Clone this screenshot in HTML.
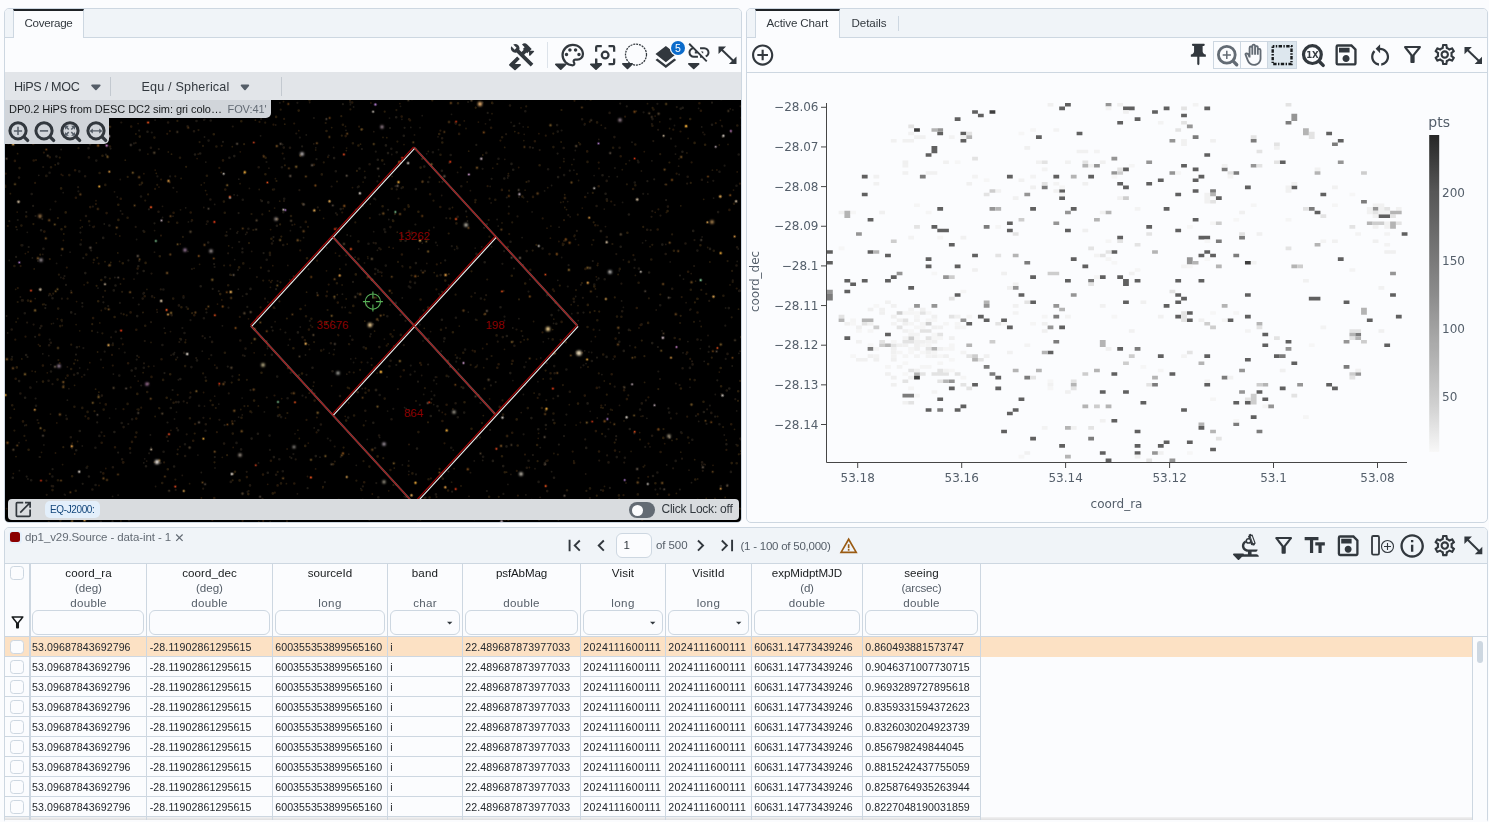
<!DOCTYPE html>
<html lang="en"><head><meta charset="utf-8"><title>Coverage / Active Chart</title>
<style>
html,body{margin:0;padding:0}
html,body{width:1489px;height:822px;overflow:hidden}
body{background:#fbfcfe;font-family:"Liberation Sans",sans-serif}
#app{position:relative;width:1489px;height:822px;overflow:hidden;background:#fbfcfe}
.panel{position:absolute;border:1px solid #cdd7e1;border-radius:5px;background:#fbfcfe}
.tabbar{position:absolute;height:28px;background:#f0f4f8;border-bottom:1px solid #cdd7e1;border-radius:4px 4px 0 0}
.tab{position:absolute;height:27px;background:#fbfcfe;border-top:2px solid #1f2327;border-left:1px solid #cdd7e1;border-right:1px solid #cdd7e1}
.t{position:absolute;white-space:pre;line-height:1;font-family:"Liberation Sans",sans-serif}
.ct{font-family:"DejaVu Sans","Liberation Sans",sans-serif;font-size:12px;fill:#525d69}
#ic{position:absolute;left:0;top:0}
</style></head>
<body>
<div id="app">
<div class="panel" style="left:4px;top:8px;width:736px;height:513px"></div>
<div class="panel" style="left:746px;top:8px;width:740px;height:513px"></div>
<div class="panel" style="left:4px;top:527px;width:1482px;height:295px"></div>
<div class="tabbar" style="left:5px;top:9px;width:736px;"></div>
<div class="tabbar" style="left:747px;top:9px;width:740px;"></div>
<div class="tab" style="left:13px;top:9px;width:69px;"></div>
<div class="tab" style="left:755px;top:9px;width:83px;"></div>
<div style="position:absolute;left:898px;top:16px;width:1px;height:15px;background:#cdd7e1"></div>
<div style="position:absolute;left:547px;top:42px;width:1px;height:26px;background:#dde3ea"></div>
<div style="position:absolute;left:5px;top:72px;width:736px;height:450px;background:#000;border-radius:0 0 4px 4px;overflow:hidden"><svg width="737" height="450" viewBox="0 0 737 450" style="position:absolute;left:0;top:0"><path stroke="#26180a" stroke-width="2.2" stroke-linecap="round" fill="none" d="M333.4 263.3h0M467.6 278.5h0M31.0 88.1h0M366.5 286.5h0M305.0 431.7h0M30.1 110.9h0M450.4 50.8h0M481.9 272.2h0M504.2 162.1h0M404.0 372.5h0M512.9 423.6h0M479.1 242.5h0M579.8 51.9h0M279.1 46.9h0M150.1 116.9h0M94.1 114.4h0M289.2 51.5h0M268.5 52.7h0M46.9 55.0h0M503.7 141.7h0M734.9 111.7h0M686.6 90.4h0M107.8 293.6h0M498.7 218.9h0M381.7 273.7h0M395.6 304.6h0M162.2 61.8h0M361.3 233.6h0M258.2 448.9h0M307.3 255.0h0M675.5 59.5h0M557.8 171.5h0M107.0 282.9h0M285.7 300.7h0M185.5 320.7h0M235.8 29.0h0M311.6 360.4h0M397.7 164.5h0M671.6 101.7h0M721.4 377.9h0M174.2 441.3h0M90.9 132.1h0M178.5 224.2h0M234.8 244.9h0M322.1 219.7h0M620.1 44.7h0M357.4 57.2h0M710.8 51.2h0M117.8 272.3h0M606.2 129.5h0M164.8 110.4h0M431.4 217.4h0M254.5 49.9h0M15.6 194.1h0M265.9 210.2h0M282.0 449.4h0M569.2 164.3h0M569.5 28.8h0M211.9 360.2h0M596.3 333.6h0M520.0 382.6h0M216.7 73.8h0M269.5 323.5h0M482.6 114.2h0M685.2 286.9h0M185.4 429.5h0M416.2 292.9h0M118.5 337.2h0M345.0 28.7h0M323.0 85.1h0M431.8 192.4h0M12.8 216.1h0M373.4 445.5h0M156.1 107.5h0M159.1 390.4h0M10.3 267.7h0M532.7 325.9h0M54.7 291.0h0M265.4 443.5h0M356.5 290.3h0M515.7 270.1h0M20.5 264.7h0M61.8 195.6h0M214.3 95.9h0M692.7 427.5h0M440.4 342.3h0M337.2 140.5h0M643.5 371.6h0M495.4 68.6h0M676.7 225.1h0M312.1 188.7h0M628.4 183.2h0M38.9 80.6h0M237.6 448.8h0M323.7 212.6h0M513.5 61.2h0M537.5 260.4h0M364.9 146.1h0M643.1 404.8h0M559.0 148.2h0M435.4 58.7h0M225.2 193.4h0M258.5 83.5h0M588.6 257.7h0M93.7 191.6h0M439.5 371.3h0M354.1 54.7h0M83.7 67.2h0M164.9 59.1h0M643.4 325.3h0M2.8 154.0h0M207.4 448.1h0M653.4 137.3h0M269.8 420.7h0M0.7 101.7h0M731.7 216.5h0M311.9 345.5h0M567.7 379.6h0M675.4 45.9h0M593.7 90.6h0M668.3 57.7h0M41.4 408.7h0M80.4 344.3h0M277.7 81.5h0M549.1 219.2h0M423.9 444.6h0M682.2 344.7h0M172.7 322.8h0M156.0 163.6h0M118.7 206.9h0M511.8 398.9h0M618.5 423.2h0M136.2 335.7h0M301.5 347.9h0M295.2 178.4h0M99.3 364.0h0M584.8 49.8h0M537.7 146.4h0M540.8 63.7h0"/><path stroke="#201810" stroke-width="2.6" stroke-linecap="round" fill="none" d="M374.3 275.1h0M481.9 287.0h0M240.5 276.6h0M558.7 76.0h0M452.7 144.8h0M509.4 273.8h0M660.7 182.0h0M636.6 252.4h0M505.0 33.5h0M265.0 183.0h0M692.5 267.5h0M534.4 322.4h0M205.4 127.5h0M19.8 42.1h0M163.1 50.5h0M549.6 301.2h0M80.1 104.2h0M667.2 216.8h0M14.0 105.6h0M609.4 65.1h0M46.9 414.0h0M147.1 224.4h0M180.1 384.0h0M700.9 26.2h0M523.7 109.3h0M380.2 440.3h0M173.9 233.4h0M444.6 136.8h0M219.7 310.3h0M219.1 371.6h0M569.0 229.8h0M503.3 103.8h0M614.6 75.8h0M731.5 193.5h0M435.4 223.7h0M591.6 134.0h0M285.0 75.8h0M732.1 175.2h0M253.7 95.2h0M118.0 390.5h0M65.8 365.3h0M662.9 134.6h0M696.9 107.7h0M107.9 395.2h0M245.0 413.4h0M370.7 171.2h0M642.2 157.7h0M456.3 114.2h0M88.4 155.0h0M734.5 218.8h0M44.1 273.2h0M401.2 444.5h0M6.7 257.5h0M603.5 390.4h0M15.4 321.5h0M297.5 265.2h0M271.1 402.7h0M406.8 160.6h0M278.8 75.6h0M83.9 85.4h0M360.9 433.5h0M481.3 80.9h0M278.2 173.0h0M384.4 294.2h0M419.9 199.0h0M182.6 54.3h0M722.5 281.9h0M636.8 331.4h0M604.6 40.9h0M171.1 330.1h0M211.9 295.9h0M153.5 139.8h0M385.6 288.7h0M335.0 324.0h0M386.5 347.3h0M25.3 315.5h0M17.7 228.4h0M385.4 155.1h0M542.2 223.3h0M572.8 241.0h0M45.8 270.8h0M437.9 406.8h0M225.8 409.9h0M374.1 363.5h0M138.9 221.0h0M81.0 144.0h0M202.6 149.5h0M435.7 203.1h0M48.0 414.2h0M267.0 171.5h0M325.9 271.3h0M87.4 417.5h0M405.3 209.9h0M30.8 50.0h0M647.1 363.8h0M145.9 75.8h0M450.8 51.6h0M370.1 202.0h0M677.6 296.3h0M374.3 176.3h0M687.6 292.4h0M445.9 441.0h0M315.9 352.5h0M189.0 59.3h0M577.1 47.3h0M497.8 265.1h0M682.7 104.8h0M117.1 387.2h0M17.0 228.4h0M564.8 319.7h0M539.6 392.6h0M450.6 331.3h0M437.1 66.3h0M137.7 226.6h0M61.8 346.9h0M601.8 165.0h0M207.1 269.9h0M542.2 419.1h0M200.8 352.3h0M521.7 179.1h0M347.4 267.7h0M90.4 438.3h0M706.3 340.9h0M118.6 355.1h0M69.1 302.8h0M43.6 308.7h0M96.9 323.6h0M415.2 245.5h0M525.0 75.3h0M680.5 171.5h0M601.7 108.9h0M697.1 390.4h0M521.8 395.7h0M721.8 318.5h0M364.6 92.3h0M44.2 443.1h0M166.7 243.3h0M36.3 254.1h0M617.2 239.3h0M235.3 268.5h0M360.3 338.8h0"/><path stroke="#201810" stroke-width="1.8" stroke-linecap="round" fill="none" d="M350.6 286.3h0M282.8 193.4h0M592.3 346.0h0M47.3 441.7h0M290.0 361.8h0M341.8 302.2h0M232.8 159.6h0M379.4 267.1h0M114.1 276.6h0M62.4 294.9h0M394.0 89.9h0M150.6 414.5h0M67.0 376.4h0M409.5 62.9h0M148.9 294.1h0M121.2 445.1h0M684.9 238.0h0M360.8 348.8h0M177.3 403.4h0M209.7 324.2h0M198.8 135.5h0M115.3 107.5h0M292.4 421.8h0M614.5 333.4h0M46.4 223.5h0M246.7 340.5h0M360.4 433.8h0M485.2 114.4h0M449.6 177.6h0M480.5 51.8h0M227.3 175.6h0M304.7 30.5h0M703.0 263.5h0M75.4 156.0h0M593.8 67.4h0M199.5 334.1h0M56.9 249.4h0M451.6 286.0h0M686.2 201.6h0M562.7 129.6h0M674.0 86.8h0M698.0 60.5h0M201.5 152.2h0M600.5 154.6h0M651.2 238.0h0M580.7 402.0h0M600.2 333.0h0M436.7 123.5h0M399.3 424.5h0M244.9 196.3h0M700.2 392.7h0M166.1 283.2h0M362.9 186.4h0M716.1 321.8h0M618.4 187.8h0M77.6 32.4h0M126.1 446.4h0M618.5 314.6h0M516.2 340.6h0M189.7 429.2h0M362.2 231.6h0M73.1 428.3h0M171.9 119.8h0M37.8 182.4h0M287.2 443.4h0M535.1 425.3h0M58.4 206.2h0M168.0 144.2h0M263.9 96.2h0M470.2 295.4h0M681.1 230.7h0M433.0 64.8h0M14.0 370.7h0M321.7 175.8h0M206.0 34.1h0M246.7 179.4h0M524.9 207.4h0M636.4 99.0h0M694.9 249.1h0M423.0 26.7h0M270.1 249.7h0M420.5 162.8h0M63.9 316.7h0M175.5 137.8h0M505.9 402.4h0M221.6 160.0h0M465.5 400.7h0M407.0 27.5h0M82.7 297.4h0M284.9 384.9h0M331.6 435.1h0M486.6 174.8h0M359.5 190.9h0M373.8 222.0h0M673.6 94.2h0M157.5 134.3h0M717.3 54.6h0M702.7 110.2h0M149.5 180.2h0M465.4 118.7h0M415.4 448.1h0M416.7 303.5h0M318.7 277.5h0M244.4 116.4h0M660.8 172.4h0M237.3 342.9h0M699.0 392.2h0M308.8 71.8h0M39.5 433.8h0M486.1 130.9h0M417.3 171.2h0M109.5 119.8h0M725.3 36.9h0M645.0 374.8h0M255.7 127.8h0M540.8 357.0h0M270.7 53.0h0M129.0 207.1h0M696.8 392.9h0M141.7 389.1h0M558.9 86.7h0M149.6 158.6h0M15.4 224.9h0M152.2 240.2h0M425.6 259.6h0M452.6 100.4h0M519.2 62.3h0M116.1 241.5h0M735.1 279.2h0M421.8 191.4h0M599.3 137.1h0M560.7 168.8h0M328.6 75.4h0M499.8 87.3h0M624.5 88.6h0M368.8 59.7h0M565.2 144.8h0M464.0 424.3h0M575.8 295.5h0M518.3 192.6h0M165.5 259.6h0M530.0 396.7h0M275.4 257.4h0M684.0 398.2h0M343.8 382.2h0"/><path stroke="#201c16" stroke-width="2.6" stroke-linecap="round" fill="none" d="M329.1 86.1h0M54.1 64.2h0M229.8 40.2h0M85.0 72.2h0M526.4 346.1h0M224.4 85.8h0M78.2 41.9h0M98.2 165.9h0M203.2 170.5h0M327.5 299.3h0M721.4 372.3h0M335.7 137.1h0M83.9 404.5h0M623.9 142.5h0M57.9 61.2h0M495.5 235.3h0M173.5 330.1h0M581.2 375.9h0M423.2 110.0h0M175.9 267.4h0M75.6 172.5h0M383.0 81.1h0M391.2 45.2h0M546.6 243.1h0M360.0 105.6h0M352.7 320.3h0M239.5 101.4h0M410.8 117.1h0M80.3 201.1h0M175.3 307.0h0M265.0 429.2h0M263.3 130.4h0M271.9 153.7h0M705.0 176.9h0M553.0 324.0h0M724.3 316.5h0M134.8 78.1h0M262.8 400.8h0M688.2 158.9h0M677.7 35.7h0M252.9 361.7h0M38.4 176.7h0M168.6 282.2h0M432.5 334.3h0M499.3 106.5h0M195.7 214.3h0M141.0 394.3h0M292.9 260.4h0M400.6 168.8h0M246.1 432.1h0M410.9 191.1h0M368.3 350.7h0M266.9 282.7h0M533.3 357.3h0M310.8 384.1h0M391.7 80.3h0M351.1 137.7h0M601.8 127.2h0M66.2 240.4h0M190.0 82.5h0M549.0 405.7h0M439.5 266.4h0M229.3 84.1h0M74.8 359.0h0M104.4 153.5h0M562.4 431.2h0M110.5 213.5h0M572.3 280.9h0M458.2 315.9h0M71.2 378.2h0M164.7 445.0h0M372.8 87.8h0M501.5 374.4h0M657.3 172.6h0M540.9 353.0h0M623.9 257.9h0M142.5 59.8h0M126.7 298.5h0M354.5 96.5h0M597.5 103.2h0M734.3 219.0h0M241.6 222.0h0M313.3 358.3h0M307.5 295.7h0M169.1 394.5h0M506.5 91.9h0M256.8 129.0h0M401.1 425.0h0M647.2 271.1h0M508.2 97.7h0M539.9 391.1h0M21.1 283.0h0M479.7 190.2h0M109.4 360.0h0M51.4 84.5h0M501.9 264.0h0M107.9 435.6h0M452.1 285.8h0M551.3 251.8h0M677.4 79.8h0M268.9 385.1h0M49.5 434.1h0M582.6 331.4h0M537.6 176.5h0M707.0 52.7h0M273.0 343.9h0M601.6 284.9h0M304.2 438.9h0M152.2 436.5h0M72.7 301.3h0M425.8 344.0h0M498.2 394.1h0M614.3 269.8h0M47.5 226.3h0M698.9 340.0h0M618.8 278.9h0M53.2 91.6h0M719.9 433.6h0M505.3 301.1h0M7.8 405.8h0M600.6 121.7h0M132.2 244.1h0M195.2 81.5h0M145.6 435.1h0M207.4 434.9h0M548.3 282.3h0M225.3 202.8h0M138.7 199.0h0M436.9 98.8h0M505.5 169.7h0M553.1 105.1h0M487.9 388.9h0M648.0 404.0h0M246.6 366.6h0M20.1 325.7h0M133.3 194.2h0M412.0 376.6h0M14.1 309.1h0M245.5 216.9h0M675.7 36.8h0M398.8 63.8h0M644.1 200.5h0M419.3 94.6h0M238.5 446.9h0M615.7 174.8h0M165.8 336.0h0M624.8 357.0h0M71.9 275.2h0M436.9 247.8h0M36.1 158.2h0M380.9 73.4h0M100.2 205.2h0"/><path stroke="#241a0c" stroke-width="1.8" stroke-linecap="round" fill="none" d="M11.1 250.0h0M57.9 46.1h0M566.2 232.7h0M596.3 53.2h0M681.9 80.9h0M573.6 108.5h0M683.1 66.4h0M189.1 196.3h0M548.9 381.5h0M518.8 68.6h0M462.2 109.9h0M453.4 297.5h0M310.7 78.0h0M132.2 337.3h0M631.4 39.1h0M268.6 117.7h0M548.8 247.2h0M630.4 203.4h0M564.3 332.7h0M254.2 117.5h0M281.4 411.7h0M92.9 52.8h0M115.9 448.9h0M269.6 136.1h0M184.6 411.7h0M619.0 348.9h0M573.2 248.6h0M399.0 72.6h0M36.5 380.3h0M559.0 172.1h0M308.3 314.2h0M235.8 337.5h0M305.7 253.4h0M692.7 407.0h0M566.9 92.6h0M542.7 115.7h0M165.8 327.5h0M385.1 232.8h0M654.8 49.8h0M702.7 175.5h0M675.8 380.2h0M199.3 110.8h0M57.6 392.6h0M645.0 174.7h0M204.0 286.8h0M447.9 337.0h0M345.7 241.0h0M42.9 67.7h0M74.3 274.6h0M341.6 76.1h0M358.1 110.1h0M573.0 233.6h0M621.0 411.0h0M533.6 361.3h0M528.6 249.5h0M270.4 106.7h0M449.1 396.7h0M639.7 393.5h0M71.1 252.6h0M337.1 213.0h0M115.5 212.0h0M163.3 80.0h0M387.1 104.4h0M304.5 277.4h0M326.6 313.8h0M693.0 226.8h0M10.7 217.3h0M362.7 184.8h0M599.3 309.0h0M60.7 306.1h0M94.8 250.9h0M146.0 270.4h0M614.6 379.8h0M520.1 118.2h0M421.9 431.5h0M300.3 233.4h0M274.7 129.2h0M407.6 443.8h0M0.5 113.3h0M12.9 246.5h0M57.3 253.5h0M725.0 212.9h0M690.6 209.1h0M455.0 286.5h0M340.5 54.4h0M295.5 168.7h0M499.5 277.3h0M292.9 358.2h0M700.8 212.1h0M265.4 215.3h0M260.0 282.9h0M451.8 174.3h0M344.4 272.4h0M571.1 353.1h0M343.7 330.8h0M634.7 360.6h0M684.1 370.9h0M95.0 331.1h0M721.3 368.0h0M636.1 344.3h0M217.3 385.3h0M235.1 111.7h0M96.8 44.9h0M522.5 129.6h0M478.7 295.7h0M91.4 170.9h0M599.5 414.4h0M710.0 426.4h0M461.0 56.5h0M723.0 72.4h0M555.8 130.4h0M45.5 342.1h0M446.6 410.2h0M30.2 226.6h0M617.3 97.7h0M303.8 272.7h0M142.9 82.1h0M454.3 254.1h0M487.0 41.7h0M707.4 98.2h0M74.7 258.8h0M196.3 112.9h0M141.0 430.3h0M372.1 301.1h0M558.3 129.8h0M545.9 154.1h0M586.9 172.7h0M642.5 31.7h0M284.7 207.7h0M46.5 251.8h0M592.9 153.4h0M626.1 379.4h0M194.6 192.3h0M110.9 162.1h0M359.7 99.3h0M714.3 73.0h0M141.9 217.4h0M497.0 150.9h0"/><path stroke="#241a0c" stroke-width="2.2" stroke-linecap="round" fill="none" d="M140.2 128.6h0M0.4 114.9h0M248.3 158.0h0M62.6 226.7h0M100.1 218.8h0M332.0 109.5h0M655.2 82.2h0M736.0 379.2h0M701.3 221.9h0M121.7 243.3h0M484.4 164.7h0M246.5 142.0h0M53.4 288.1h0M389.9 142.2h0M571.9 102.1h0M12.7 230.0h0M484.6 126.7h0M735.0 308.9h0M350.3 150.4h0M727.7 209.9h0M486.6 284.0h0M220.6 163.7h0M262.7 274.3h0M194.6 70.1h0M638.5 394.8h0M170.3 104.3h0M210.8 336.0h0M318.8 90.4h0M667.1 162.4h0M258.2 208.6h0M492.3 92.0h0M597.9 335.9h0M718.1 355.1h0M391.4 38.1h0M418.6 238.4h0M497.5 328.4h0M557.9 313.1h0M643.9 226.3h0M569.7 163.4h0M193.5 58.1h0M82.4 394.5h0M38.3 40.0h0M334.4 183.9h0M11.2 155.0h0M470.9 294.8h0M355.1 297.9h0M172.8 377.5h0M143.6 294.5h0M260.2 50.7h0M243.6 419.1h0M177.9 164.9h0M30.6 50.6h0M303.0 154.8h0M239.4 334.1h0M623.3 323.3h0M393.0 189.9h0M198.0 73.9h0M329.8 389.5h0M607.4 172.0h0M466.4 224.6h0M328.6 282.5h0M425.9 406.4h0M482.2 207.5h0M170.4 407.6h0M322.6 238.0h0M327.0 248.9h0M572.8 142.7h0M689.0 249.8h0M652.5 422.3h0M73.5 76.2h0M320.7 51.0h0M375.7 177.3h0M605.8 337.6h0M66.2 272.7h0M198.1 301.4h0M507.2 150.4h0M392.4 69.6h0M125.7 315.4h0M48.2 221.7h0M353.7 114.4h0M152.2 112.8h0M19.4 363.9h0M171.0 287.6h0M424.1 158.4h0M581.4 418.9h0M274.4 229.4h0M696.3 217.9h0M261.8 269.0h0M33.5 351.0h0M344.5 240.7h0M428.5 128.7h0M5.5 345.8h0M493.8 424.8h0M275.7 37.7h0M117.1 219.8h0M647.3 172.8h0M571.0 218.1h0M348.8 300.5h0M675.1 251.0h0M309.1 270.1h0M450.6 222.7h0M563.6 430.2h0M614.2 426.9h0M516.5 259.1h0M475.0 365.4h0M214.1 313.6h0M402.6 438.4h0M621.9 112.3h0M43.8 449.9h0M356.6 418.2h0M286.5 321.3h0M272.6 430.2h0M420.1 266.5h0M558.9 89.5h0M373.5 114.7h0M593.8 301.4h0M219.1 193.5h0M35.0 385.0h0M465.7 292.9h0M470.7 35.8h0M360.4 316.4h0M521.2 34.4h0M527.7 178.6h0M725.5 444.1h0M588.4 168.1h0M81.5 55.3h0M9.4 358.6h0M548.3 61.6h0M479.6 227.6h0M727.1 198.9h0M518.9 441.3h0M358.5 389.2h0M160.2 261.1h0M726.7 245.3h0M21.2 353.2h0M366.7 293.1h0M343.9 272.1h0M386.8 221.1h0M87.0 258.9h0M633.5 406.1h0M396.6 163.2h0M552.9 382.5h0M282.5 433.0h0M255.6 235.4h0M712.5 344.5h0M555.6 267.8h0M3.3 71.4h0M424.6 105.4h0M351.4 408.7h0M257.3 142.4h0M559.1 168.9h0M735.0 436.6h0M722.6 189.1h0M97.4 261.3h0M297.3 131.6h0M53.9 202.7h0M154.0 336.0h0M39.1 232.3h0M104.9 206.5h0M676.7 361.2h0M241.9 307.8h0M419.9 316.2h0M345.4 37.4h0M272.7 399.9h0M210.2 439.1h0"/><path stroke="#241a0c" stroke-width="2.6" stroke-linecap="round" fill="none" d="M172.2 150.7h0M623.9 189.9h0M9.2 56.6h0M100.4 236.5h0M227.8 361.6h0M175.0 85.7h0M471.6 182.3h0M77.3 335.9h0M306.4 246.8h0M184.9 346.3h0M498.1 342.6h0M608.1 75.8h0M484.1 424.7h0M592.3 248.3h0M582.5 89.9h0M451.4 151.4h0M550.6 230.7h0M490.3 127.7h0M424.6 425.6h0M236.5 345.8h0M732.3 53.5h0M53.2 236.6h0M286.0 144.0h0M612.0 244.6h0M736.2 265.1h0M41.3 103.9h0M157.2 411.0h0M52.9 408.3h0M142.2 320.0h0M632.8 422.4h0M582.5 255.0h0M432.1 203.9h0M64.3 103.1h0M219.9 280.7h0M152.3 36.8h0M360.5 320.8h0M168.6 330.7h0M16.4 153.6h0M436.0 257.8h0M689.7 308.1h0M646.3 187.5h0M331.9 211.3h0M218.9 129.6h0M470.5 128.1h0M264.9 180.9h0M575.0 72.3h0M387.5 264.5h0M139.2 159.7h0M616.4 244.7h0M395.8 262.9h0M522.8 336.1h0M353.4 169.4h0M548.4 75.1h0M435.5 82.8h0M52.6 307.6h0M548.5 341.5h0M46.0 95.2h0M337.9 52.7h0M16.6 173.2h0M131.4 360.6h0M491.6 263.4h0M272.2 147.2h0M403.5 393.8h0M68.1 444.9h0M14.6 96.1h0M630.3 72.5h0M316.2 278.6h0M389.0 274.3h0M423.5 407.3h0M55.4 448.6h0M685.8 217.7h0M353.4 186.9h0M7.2 333.3h0M497.1 65.2h0M211.4 74.5h0M69.4 334.8h0M315.4 249.1h0M613.9 423.4h0M669.7 266.0h0M94.6 101.0h0M23.0 228.6h0M168.2 226.6h0M602.0 128.7h0M545.7 306.7h0M540.6 338.6h0M395.7 168.7h0M441.7 303.9h0M294.0 303.2h0M304.5 28.2h0M55.2 254.1h0M6.6 287.4h0M364.4 394.6h0M238.3 191.4h0M415.2 425.8h0M647.4 53.7h0M547.7 267.4h0M349.1 343.5h0M140.2 253.7h0M413.4 360.1h0M502.7 175.1h0M70.8 418.7h0M56.6 248.0h0M703.1 292.1h0M731.7 391.2h0M729.0 131.8h0M219.8 140.7h0M158.1 307.9h0M737.0 53.2h0M100.3 112.9h0M81.3 182.6h0M386.8 116.8h0M82.6 339.9h0M379.7 326.6h0M592.1 50.4h0M98.7 337.6h0M683.1 365.5h0M47.5 418.1h0M718.4 223.8h0M633.6 210.7h0M675.6 440.0h0M66.1 297.0h0M316.8 102.4h0M149.4 65.6h0M44.5 57.3h0M551.9 182.6h0M557.9 173.0h0M732.5 373.5h0M568.7 226.8h0M407.4 401.4h0M133.5 337.6h0M397.8 115.2h0M347.9 71.2h0M598.2 282.5h0M201.9 103.7h0M562.0 418.3h0M585.0 416.4h0M122.6 145.7h0M458.3 280.8h0M180.1 294.1h0M107.7 272.9h0M301.0 244.2h0M674.8 267.2h0M89.0 187.8h0M405.2 195.4h0M84.1 149.2h0M614.8 196.9h0M207.7 333.0h0M9.4 194.0h0M630.3 113.3h0M708.8 178.7h0M21.2 144.5h0M648.5 37.5h0M276.0 411.4h0M223.2 213.2h0M122.6 331.9h0"/><path stroke="#26180a" stroke-width="2.6" stroke-linecap="round" fill="none" d="M62.6 303.6h0M726.2 352.3h0M334.0 432.7h0M144.9 428.9h0M100.7 56.7h0M695.9 38.8h0M10.7 306.8h0M85.2 135.1h0M619.1 318.3h0M201.2 237.0h0M396.7 44.6h0M664.0 422.7h0M285.9 210.4h0M582.2 79.4h0M220.3 117.6h0M473.3 323.3h0M284.4 437.3h0M544.5 182.1h0M594.0 379.5h0M132.6 196.6h0M580.4 196.9h0M643.4 438.4h0M404.0 159.1h0M525.3 197.9h0M593.7 114.2h0M652.7 157.5h0M610.6 266.6h0M126.2 54.6h0M564.1 441.9h0M637.2 447.6h0M425.1 122.3h0M156.5 287.3h0M321.5 224.1h0M125.6 240.4h0M185.7 140.5h0M363.8 318.4h0M606.7 302.2h0M591.8 315.9h0M580.2 125.0h0M28.7 88.5h0M18.0 349.4h0M161.9 364.8h0M340.7 64.1h0M635.7 253.0h0M123.1 291.2h0M359.2 410.2h0M437.4 349.0h0M9.9 88.9h0M496.9 117.9h0M493.6 292.2h0M139.7 224.3h0M410.9 77.2h0M399.7 137.4h0M494.7 334.9h0M736.7 45.7h0M309.0 92.7h0M125.0 376.4h0M88.1 246.1h0M131.3 346.6h0M303.9 257.6h0M396.9 182.5h0M115.8 126.8h0M241.9 405.1h0M615.7 84.2h0M405.0 48.3h0M569.2 446.1h0M70.1 98.3h0M631.8 236.0h0M37.9 293.6h0M609.7 284.6h0M34.3 262.9h0M227.2 349.4h0M404.1 47.2h0M258.0 402.6h0M39.4 159.6h0M209.3 426.0h0M724.4 137.9h0M621.9 327.1h0M190.1 352.0h0M545.5 301.3h0M692.5 240.5h0M6.1 441.6h0M694.4 31.2h0M289.3 411.5h0M347.2 30.5h0M598.0 418.6h0M130.5 365.0h0M556.6 249.9h0M536.9 336.0h0M300.8 149.9h0M454.1 61.9h0M272.6 413.4h0M548.0 217.5h0M579.8 323.6h0M486.1 55.8h0M101.6 141.1h0M655.6 380.0h0M415.6 227.5h0M628.1 117.0h0M212.5 39.8h0M131.3 257.8h0M98.3 401.4h0M146.5 304.9h0M436.4 404.5h0M569.1 390.9h0M110.0 375.3h0M362.4 205.6h0M187.0 148.2h0M682.2 280.5h0M105.0 74.5h0M398.8 298.2h0M469.8 279.4h0M127.0 369.9h0M189.3 243.3h0M118.3 390.2h0M415.2 291.0h0M590.3 153.3h0M268.9 235.6h0M443.1 418.5h0M44.8 222.1h0M44.6 428.9h0M44.8 85.2h0M343.0 441.7h0M492.3 295.7h0M385.6 262.2h0M265.9 388.8h0M610.0 378.6h0M96.7 370.8h0M507.2 360.7h0M693.0 342.2h0M435.3 135.0h0M168.6 140.7h0M507.6 288.9h0M489.4 341.5h0M309.6 328.6h0M590.9 359.1h0M457.5 435.8h0M2.2 52.9h0M332.8 230.6h0M13.4 441.4h0M385.4 398.0h0M683.1 199.8h0M528.0 124.9h0M100.8 332.4h0M83.4 346.4h0M542.5 388.6h0M218.0 88.4h0M603.4 26.8h0M500.1 447.4h0M28.2 71.9h0M188.2 368.8h0M70.9 125.7h0M441.6 332.7h0M529.9 69.3h0M299.9 268.2h0"/><path stroke="#2a1e0c" stroke-width="2.2" stroke-linecap="round" fill="none" d="M733.8 382.3h0M417.3 110.2h0M298.3 132.3h0M281.9 246.5h0M143.1 122.4h0M647.6 35.9h0M685.0 307.4h0M466.5 199.3h0M587.8 120.9h0M91.6 213.8h0M522.7 267.4h0M181.1 94.8h0M54.8 85.6h0M664.4 90.5h0M477.0 351.1h0M244.0 171.1h0M180.3 270.4h0M226.7 310.6h0M655.3 222.5h0M82.6 210.7h0M594.2 239.6h0M58.3 375.2h0M187.1 241.2h0M92.3 185.8h0M417.1 86.9h0M597.1 361.9h0M689.9 230.4h0M89.5 339.2h0M379.7 39.7h0M601.8 322.7h0M427.3 28.4h0M685.8 110.9h0M239.1 72.2h0M35.2 182.7h0M102.1 83.8h0M479.5 316.7h0M419.5 426.0h0M282.4 341.0h0M189.7 361.5h0M220.9 431.3h0M267.9 117.6h0M443.7 161.5h0M638.2 154.9h0M540.6 298.6h0M506.8 291.9h0M532.6 389.2h0M338.6 375.6h0M592.5 193.3h0M279.9 93.3h0M585.0 240.4h0M521.5 110.0h0M32.1 52.0h0M35.0 274.0h0M639.4 284.2h0M44.8 401.9h0M526.8 427.9h0M445.2 146.4h0M576.9 211.0h0M163.6 149.9h0M456.5 315.0h0M406.5 203.5h0M276.3 164.6h0M141.5 434.1h0M351.9 98.9h0M378.8 242.9h0M513.3 428.7h0M531.4 172.9h0M69.1 291.6h0M733.0 328.8h0M658.5 357.1h0M434.6 396.9h0M588.7 150.3h0M336.3 44.2h0M648.1 435.1h0M437.1 219.9h0M609.8 225.4h0M87.2 252.2h0M227.6 408.3h0M154.4 336.3h0M706.8 285.7h0M275.5 210.3h0M514.0 227.4h0M28.4 152.1h0M556.5 38.0h0M483.7 148.0h0M342.7 315.7h0M352.6 320.0h0M275.1 152.4h0M205.5 328.6h0M209.0 26.8h0M653.3 317.1h0M635.0 367.6h0M44.8 187.1h0M255.9 195.7h0M52.9 146.1h0M371.2 225.7h0M609.7 370.6h0M358.7 353.4h0M671.7 367.2h0M388.4 413.0h0M504.1 118.7h0M134.6 112.8h0M589.6 239.0h0M220.9 41.9h0M554.8 213.6h0M222.1 383.2h0M605.1 311.8h0M215.5 31.5h0M37.9 232.5h0M470.2 130.3h0M172.4 48.9h0M209.5 390.3h0M344.2 316.3h0M318.0 414.9h0M228.5 401.8h0M271.5 109.0h0M675.7 243.8h0M403.3 133.1h0M378.3 386.2h0M443.9 202.0h0M423.0 350.3h0M636.8 268.6h0M630.3 275.4h0M596.1 335.5h0M122.7 104.9h0M591.8 423.7h0M118.7 242.3h0M455.8 95.4h0M336.8 63.7h0"/><path stroke="#1c1813" stroke-width="1.8" stroke-linecap="round" fill="none" d="M232.4 123.4h0M421.7 81.8h0M283.3 273.2h0M146.0 375.3h0M171.5 340.1h0M502.9 412.4h0M428.7 332.6h0M357.3 316.6h0M183.0 179.4h0M66.1 218.7h0M557.9 443.9h0M719.3 363.0h0M535.8 286.0h0M58.2 120.7h0M527.1 139.9h0M113.1 423.1h0M507.9 308.6h0M345.6 164.0h0M345.8 286.9h0M521.0 290.1h0M470.2 176.1h0M51.6 191.4h0M731.7 338.9h0M131.6 167.5h0M210.0 396.0h0M65.1 180.2h0M532.9 309.7h0M345.4 32.7h0M354.1 441.8h0M538.3 269.8h0M448.3 378.2h0M614.2 198.8h0M348.6 290.5h0M345.2 264.0h0M396.9 47.3h0M570.5 167.3h0M585.2 339.3h0M518.4 322.5h0M642.9 122.0h0M693.6 36.4h0M237.6 224.2h0M413.7 176.9h0M183.4 149.9h0M74.7 296.0h0M433.5 77.7h0M71.0 28.4h0M727.9 37.9h0M637.6 170.9h0M45.8 292.6h0M403.7 389.0h0M685.0 315.3h0M22.3 160.3h0M65.7 68.5h0M14.4 398.7h0M386.8 82.5h0M403.9 399.4h0M566.7 435.6h0M695.3 276.6h0M476.8 174.8h0M104.6 346.1h0M579.7 278.8h0M657.0 258.8h0M583.9 280.1h0M38.9 373.0h0M362.3 367.4h0M553.4 448.1h0M591.8 207.9h0M59.5 422.4h0M710.3 322.5h0M41.6 103.8h0M431.5 311.8h0M55.9 205.5h0M4.2 188.5h0M734.7 218.8h0M259.4 339.9h0M269.8 236.3h0M67.1 435.5h0M370.6 127.6h0M186.4 149.3h0M43.8 283.7h0M45.4 137.5h0M285.4 158.7h0M397.4 392.9h0M472.3 293.1h0M589.1 103.6h0M518.2 54.8h0M139.7 386.8h0M618.4 235.3h0M48.4 251.3h0M566.8 241.7h0M382.0 305.0h0M506.1 50.4h0M298.6 165.7h0M35.0 145.5h0M197.3 279.2h0M395.5 34.3h0M469.3 388.9h0M415.0 55.7h0M368.7 159.7h0M720.6 236.0h0M59.0 58.5h0M112.3 125.0h0M265.2 449.7h0M25.7 315.9h0M324.3 281.2h0M84.6 153.3h0M568.9 98.2h0M594.5 258.2h0M508.5 54.2h0M157.6 145.5h0M426.4 319.3h0M295.3 255.0h0M60.2 422.9h0M56.3 183.3h0M168.2 115.7h0M169.5 347.0h0M665.5 225.6h0M213.8 332.1h0M100.5 30.2h0M570.3 78.5h0M669.5 53.5h0M617.6 130.4h0M624.9 273.7h0M192.9 383.1h0M233.9 169.8h0M732.2 189.4h0M556.7 185.5h0M310.8 75.8h0M539.6 118.9h0M432.3 173.3h0M314.3 179.2h0M229.8 348.9h0M665.2 189.9h0M418.0 268.9h0M697.1 164.9h0M77.3 374.0h0M382.6 339.1h0M107.6 424.4h0M586.3 269.4h0M110.8 336.8h0M237.1 326.1h0M357.8 427.4h0M384.5 46.1h0M417.2 43.7h0M418.7 322.4h0M401.3 441.2h0M586.7 280.5h0M446.5 42.3h0"/><path stroke="#26180a" stroke-width="1.8" stroke-linecap="round" fill="none" d="M51.8 350.9h0M276.7 326.6h0M74.5 51.4h0M12.2 140.1h0M302.5 404.5h0M91.0 128.7h0M84.2 28.1h0M590.4 264.7h0M492.6 431.1h0M38.9 159.6h0M72.6 369.5h0M84.8 290.7h0M267.8 193.7h0M218.1 35.5h0M591.3 204.8h0M403.4 431.8h0M310.6 396.9h0M71.6 229.6h0M243.5 246.8h0M659.7 371.7h0M367.3 422.0h0M340.2 344.3h0M715.4 48.3h0M459.3 48.9h0M575.4 350.5h0M289.6 152.4h0M735.5 381.7h0M577.3 136.1h0M516.0 35.8h0M383.7 418.8h0M201.9 122.5h0M57.8 103.4h0M543.0 445.5h0M639.3 79.7h0M152.9 32.1h0M79.1 212.8h0M412.7 447.6h0M265.6 157.6h0M604.4 199.4h0M76.9 304.8h0M332.9 262.6h0M264.2 208.5h0M389.0 258.2h0M473.4 50.1h0M388.2 176.2h0M262.7 412.3h0M437.3 340.4h0M321.5 198.8h0M198.6 320.5h0M180.7 267.8h0M375.0 200.0h0M330.5 181.1h0M397.6 194.7h0M341.1 183.4h0M317.8 415.8h0M42.3 300.8h0M8.4 401.6h0M133.1 51.6h0M365.9 31.0h0M605.4 350.4h0M76.3 167.8h0M89.3 154.3h0M293.8 58.7h0M33.5 272.6h0M661.4 140.4h0M542.0 156.2h0M533.2 366.3h0M80.1 27.6h0M21.1 368.4h0M20.4 181.6h0M4.4 440.4h0M175.3 172.0h0M50.5 381.0h0M114.6 189.4h0M553.9 169.5h0M280.5 346.1h0M592.9 191.5h0M531.5 287.1h0M88.3 69.8h0M27.1 299.1h0M133.9 285.2h0M196.4 425.9h0M533.9 61.7h0M1.6 436.7h0M94.0 413.5h0M58.4 168.4h0M216.8 227.9h0M405.7 343.7h0M17.2 35.5h0M477.7 276.5h0M83.1 60.6h0M282.1 377.0h0M545.4 166.2h0M52.4 246.8h0M394.9 31.6h0M303.3 371.1h0M650.1 44.1h0M594.0 96.5h0M555.1 95.7h0M484.6 326.9h0M138.9 101.7h0M175.0 374.7h0M133.2 309.1h0M450.5 282.9h0M154.0 115.1h0M192.1 86.6h0M513.7 95.5h0M56.3 102.5h0M193.2 82.1h0M212.5 232.1h0M732.2 99.9h0M403.7 402.6h0M728.5 118.1h0M435.8 191.0h0M69.7 382.0h0M100.8 396.5h0M249.2 280.8h0M98.2 295.6h0M67.2 371.2h0M577.3 280.7h0M714.3 300.1h0M347.5 115.6h0M634.0 256.0h0M235.3 79.8h0M96.3 238.5h0M573.5 172.9h0M150.2 98.1h0M209.8 293.1h0M23.1 180.0h0M88.4 190.6h0M353.0 114.9h0M376.8 203.9h0M708.0 393.3h0M431.7 305.1h0M75.5 148.3h0M524.4 395.5h0M338.1 136.7h0M487.8 96.2h0M650.2 140.3h0M151.9 237.7h0M228.2 375.4h0M165.9 358.3h0M711.9 97.9h0M114.8 164.0h0"/><path stroke="#201c16" stroke-width="1.8" stroke-linecap="round" fill="none" d="M502.7 105.9h0M733.9 281.3h0M229.1 122.8h0M337.4 222.2h0M513.9 246.7h0M229.7 187.6h0M233.8 107.2h0M608.2 287.1h0M159.3 256.2h0M19.8 353.5h0M150.1 48.1h0M309.2 355.9h0M428.9 155.5h0M568.9 87.4h0M678.5 207.1h0M355.8 416.6h0M172.4 285.5h0M520.9 422.8h0M731.2 372.6h0M612.3 104.7h0M554.1 155.2h0M341.0 58.3h0M209.7 132.4h0M548.6 251.4h0M268.3 168.9h0M543.5 266.6h0M699.2 289.3h0M493.2 154.1h0M348.6 34.9h0M463.3 240.1h0M169.5 280.7h0M329.3 277.6h0M518.6 125.7h0M487.7 31.4h0M627.0 70.2h0M660.1 112.4h0M434.0 222.0h0M492.1 147.5h0M50.0 38.6h0M200.8 90.1h0M438.9 269.5h0M301.3 62.9h0M333.9 159.8h0M390.5 446.3h0M107.9 271.2h0M581.0 291.6h0M372.4 178.3h0M12.0 157.6h0M262.9 431.0h0M674.1 102.5h0M34.4 384.9h0M137.8 240.6h0M115.6 138.9h0M109.9 205.5h0M32.9 189.0h0M61.0 343.4h0M129.9 304.2h0M43.8 223.5h0M678.0 280.8h0M661.7 392.9h0M350.1 185.2h0M92.6 260.3h0M686.5 410.7h0M315.0 385.2h0M517.1 165.6h0M2.7 260.9h0M253.5 390.9h0M474.3 365.6h0M696.0 268.1h0M373.4 248.6h0M233.6 345.1h0M397.3 225.9h0M477.7 388.4h0M552.8 208.3h0M374.6 365.4h0M596.9 302.6h0M401.2 336.7h0M145.4 362.9h0M351.3 393.3h0M27.4 185.9h0M646.9 88.8h0M217.4 253.8h0M682.9 269.6h0M168.5 115.8h0M240.7 162.3h0M299.7 433.6h0M733.2 176.9h0M696.7 54.9h0M373.1 200.1h0M62.4 328.2h0M546.6 113.5h0M365.3 132.0h0M342.2 162.9h0M404.1 442.0h0M640.7 168.6h0M196.3 400.5h0M641.9 346.3h0M546.6 399.7h0M255.6 63.8h0M262.9 230.1h0M570.7 224.5h0M33.8 103.3h0M128.1 225.8h0M199.5 65.0h0M405.8 55.4h0M708.6 126.1h0M56.1 77.5h0M225.4 156.9h0M93.0 216.1h0M99.3 152.0h0M383.8 147.5h0M399.6 335.6h0M379.4 92.2h0M180.7 135.8h0M517.6 264.0h0M604.0 104.6h0M138.8 390.8h0M444.1 91.1h0M206.9 28.4h0M514.5 51.4h0M436.3 279.1h0M507.8 256.0h0M262.5 276.5h0M580.4 27.4h0M31.7 309.8h0M234.4 169.8h0M535.3 375.6h0M485.8 254.1h0M582.8 121.1h0M693.7 349.4h0M300.5 283.0h0M233.4 217.2h0M108.4 302.1h0M616.6 228.9h0M37.8 281.8h0M340.2 235.4h0M40.8 233.0h0M93.5 323.0h0M443.5 213.0h0M670.5 82.1h0M462.5 149.0h0M727.2 294.0h0M499.5 248.5h0M274.9 30.8h0M1.6 244.0h0M205.0 265.0h0M592.0 224.7h0"/><path stroke="#201c16" stroke-width="2.2" stroke-linecap="round" fill="none" d="M198.8 437.7h0M288.6 204.4h0M527.9 383.0h0M30.6 326.5h0M405.4 302.7h0M61.0 212.9h0M470.8 247.7h0M509.3 53.9h0M237.4 176.7h0M134.1 58.6h0M113.1 380.6h0M162.5 350.5h0M704.2 274.7h0M233.0 197.9h0M78.3 186.1h0M661.1 128.1h0M383.1 137.8h0M663.4 336.4h0M77.7 411.8h0M712.3 308.3h0M485.1 358.0h0M239.6 283.9h0M133.8 232.5h0M429.4 323.4h0M40.3 236.1h0M35.1 256.2h0M245.5 318.2h0M243.3 37.2h0M209.1 192.1h0M23.7 175.0h0M199.7 36.2h0M707.0 30.7h0M611.2 364.2h0M286.4 386.1h0M564.8 98.7h0M11.1 184.9h0M461.1 139.4h0M132.4 201.4h0M183.7 34.6h0M136.2 313.5h0M398.2 266.7h0M77.3 231.1h0M387.8 148.2h0M596.0 418.1h0M541.7 291.2h0M485.9 313.4h0M561.4 342.6h0M185.4 325.0h0M182.0 437.7h0M471.3 72.9h0M482.7 40.9h0M86.2 178.5h0M385.0 56.0h0M213.8 219.2h0M391.3 293.0h0M353.5 114.8h0M423.1 292.5h0M209.8 385.1h0M303.5 197.2h0M134.2 189.0h0M47.6 397.2h0M221.8 163.6h0M116.3 266.5h0M710.1 344.7h0M149.5 151.3h0M674.9 417.5h0M100.9 82.7h0M445.1 294.9h0M503.9 134.5h0M311.5 87.2h0M167.6 318.0h0M21.7 404.6h0M374.0 104.3h0M352.7 221.7h0M443.5 304.6h0M420.5 425.6h0M268.5 165.1h0M578.5 240.6h0M105.6 76.6h0M399.6 55.8h0M337.9 32.2h0M396.5 116.2h0M717.5 64.9h0M527.9 75.8h0M207.7 216.9h0M138.4 158.9h0M219.6 353.2h0M75.4 160.6h0M242.3 234.9h0M312.1 220.8h0M509.0 196.5h0M614.0 260.9h0M132.2 283.8h0M395.5 242.9h0M501.8 125.5h0M21.3 140.1h0M443.4 399.5h0M372.9 198.4h0M587.8 189.0h0M233.6 141.1h0M374.6 142.5h0M447.1 419.7h0M592.0 285.6h0M71.0 282.6h0M652.9 275.0h0M559.0 364.1h0M356.9 77.0h0M615.2 31.6h0M621.8 34.4h0M178.5 440.7h0M434.1 338.6h0M222.8 294.6h0M642.4 109.2h0M552.6 81.6h0M437.4 109.8h0M92.2 350.4h0M258.6 181.1h0M413.0 309.7h0M89.0 61.7h0M666.0 66.7h0M490.7 310.1h0M410.4 152.5h0M123.4 188.4h0M553.6 238.3h0M30.1 264.8h0M553.9 372.6h0M426.5 327.2h0M143.9 137.3h0M280.4 260.5h0M348.0 209.9h0M302.6 416.2h0M329.5 226.4h0M649.2 107.3h0M218.0 69.8h0M107.5 449.4h0M267.7 258.6h0M201.5 240.5h0M103.7 193.6h0M440.2 188.4h0M735.7 367.3h0M98.4 230.3h0M22.5 285.0h0M271.1 217.2h0M159.5 301.1h0M604.9 415.9h0M293.5 432.8h0M675.0 203.5h0M593.6 206.4h0M486.6 106.8h0M266.6 255.1h0M297.1 74.4h0M28.1 133.9h0"/><path stroke="#201810" stroke-width="2.2" stroke-linecap="round" fill="none" d="M735.5 34.3h0M685.6 237.3h0M332.1 142.7h0M392.9 317.1h0M699.5 62.5h0M136.0 112.5h0M671.6 341.6h0M272.6 209.0h0M702.1 337.3h0M329.7 374.5h0M312.8 135.4h0M214.4 347.8h0M241.7 399.8h0M294.4 118.2h0M400.5 248.9h0M284.8 267.5h0M640.9 328.4h0M340.9 192.6h0M181.7 362.3h0M682.1 111.6h0M251.9 205.1h0M393.5 126.5h0M431.5 425.0h0M511.5 257.5h0M609.6 133.0h0M130.7 70.9h0M727.8 208.4h0M300.9 325.4h0M716.9 53.9h0M146.5 201.6h0M106.1 265.3h0M541.3 328.1h0M287.3 153.0h0M501.1 62.2h0M241.9 160.6h0M291.3 61.5h0M575.9 212.8h0M584.9 426.0h0M648.3 69.1h0M0.5 54.8h0M255.5 32.3h0M155.8 217.4h0M308.9 310.3h0M38.2 95.0h0M481.1 223.2h0M391.7 117.4h0M719.2 429.6h0M653.1 57.8h0M191.2 286.1h0M674.6 313.1h0M261.8 325.5h0M735.2 366.6h0M681.4 282.1h0M655.5 143.6h0M483.4 433.2h0M237.9 283.3h0M197.6 264.2h0M58.5 313.4h0M47.5 312.2h0M689.5 168.1h0M260.0 226.7h0M603.0 342.1h0M153.8 77.1h0M58.6 206.5h0M655.0 307.0h0M611.0 367.7h0M577.9 225.8h0M198.4 345.8h0M470.0 221.0h0M326.6 114.5h0M670.9 311.5h0M186.9 197.0h0M171.8 356.2h0M223.8 321.4h0M665.9 346.4h0M548.3 326.5h0M130.7 154.9h0M178.7 329.4h0M376.6 200.6h0M337.1 235.4h0M730.3 327.2h0M174.3 270.0h0M687.0 289.3h0M440.9 255.9h0M594.2 388.6h0M344.4 300.2h0M227.8 54.5h0M170.7 417.9h0M646.9 52.1h0M616.4 211.7h0M41.7 422.8h0M290.7 387.4h0M555.8 446.4h0M704.2 228.9h0M609.7 314.7h0M619.2 390.6h0M398.8 273.2h0M198.2 416.7h0M28.6 252.6h0M563.3 143.2h0M98.0 224.9h0M508.1 269.5h0M22.1 250.6h0M571.9 158.9h0M541.2 389.2h0M645.7 158.2h0M689.1 194.0h0M33.8 435.4h0M435.0 429.1h0M647.3 139.2h0M32.5 348.0h0M73.1 115.2h0M50.5 129.5h0M87.9 134.6h0M56.9 226.7h0M146.0 250.2h0M602.1 383.4h0M357.9 414.4h0M397.3 194.0h0M671.8 35.1h0M632.8 88.7h0M206.8 442.4h0M117.4 142.0h0M611.3 182.1h0M677.0 386.7h0M269.2 117.3h0M223.1 181.3h0M406.6 163.0h0M116.3 50.5h0M184.7 325.9h0M423.6 266.7h0M257.5 426.8h0M646.5 144.8h0M600.3 56.2h0M139.0 291.3h0M637.8 344.1h0M512.5 144.4h0M101.7 34.8h0M697.8 398.8h0M331.5 156.0h0M580.2 367.4h0M365.1 264.4h0M139.8 269.0h0M534.7 78.1h0M368.6 170.8h0M390.5 114.2h0M182.1 330.8h0M594.3 315.4h0M492.8 269.7h0M96.5 360.3h0M279.0 129.0h0M4.3 149.2h0M668.1 396.3h0"/><path stroke="#1c1813" stroke-width="2.2" stroke-linecap="round" fill="none" d="M7.1 284.8h0M55.2 54.5h0M518.6 362.3h0M720.3 253.7h0M181.5 235.0h0M288.1 206.8h0M430.9 170.6h0M152.4 104.4h0M477.6 30.6h0M209.6 195.0h0M463.1 30.0h0M405.8 293.6h0M352.7 115.3h0M322.8 366.5h0M563.6 193.2h0M165.1 104.4h0M690.9 343.9h0M277.5 72.5h0M414.8 332.9h0M242.6 419.9h0M416.2 198.6h0M22.9 407.0h0M144.1 381.3h0M479.1 155.8h0M173.5 307.8h0M409.8 299.5h0M308.9 46.0h0M638.2 121.8h0M129.0 71.4h0M252.4 245.5h0M30.5 144.0h0M471.4 181.6h0M430.6 305.2h0M388.3 336.8h0M514.0 125.0h0M708.3 108.8h0M647.2 433.2h0M256.1 46.9h0M297.5 323.7h0M719.6 93.7h0M392.7 272.2h0M288.4 382.1h0M653.3 299.5h0M79.4 302.9h0M562.8 214.5h0M131.7 287.6h0M37.3 147.1h0M199.0 47.9h0M446.8 174.2h0M125.3 380.9h0M292.4 30.8h0M44.7 267.6h0M307.0 317.8h0M655.2 416.7h0M304.8 248.9h0M451.2 289.7h0M325.4 368.6h0M323.7 83.5h0M650.4 417.6h0M206.3 283.2h0M703.6 279.9h0M77.4 234.6h0M499.5 244.7h0M364.3 447.8h0M99.7 279.7h0M294.9 65.6h0M330.9 141.2h0M103.2 234.0h0M335.7 385.0h0M301.5 302.8h0M579.5 52.8h0M114.9 230.9h0M391.2 412.7h0M704.9 333.6h0M638.6 40.3h0M481.9 419.0h0M95.8 400.1h0M523.5 219.6h0M670.6 74.3h0M370.8 79.7h0M365.8 262.1h0M295.6 155.2h0M70.2 242.0h0M477.6 96.8h0M95.9 287.7h0M177.4 256.0h0M441.3 146.2h0M414.7 252.6h0M600.4 364.4h0M372.4 109.4h0M252.5 244.7h0M264.9 377.9h0M119.8 280.5h0M726.2 60.4h0M138.3 221.8h0M652.4 31.8h0M475.5 330.9h0M12.8 148.0h0M497.4 191.8h0M261.5 90.0h0M640.2 374.9h0M629.4 195.9h0M232.1 160.9h0M200.5 305.3h0M362.6 290.5h0M279.2 86.7h0M319.9 410.2h0M73.4 119.3h0M199.6 47.5h0M603.5 357.2h0M560.1 353.0h0M371.3 411.1h0M223.5 235.7h0M498.4 421.9h0M78.4 276.1h0M499.1 179.2h0M556.6 58.5h0M146.8 60.5h0M609.9 96.1h0M578.5 293.3h0M324.2 170.2h0M411.0 402.4h0M736.4 366.3h0M185.5 248.2h0M428.9 308.4h0M199.9 266.2h0M172.4 382.1h0M227.4 304.3h0M163.0 369.0h0M720.7 286.9h0M123.3 352.0h0M59.5 204.1h0M484.8 47.8h0M701.5 351.9h0"/><path stroke="#1c1813" stroke-width="2.6" stroke-linecap="round" fill="none" d="M179.1 280.9h0M44.6 100.7h0M25.9 33.6h0M382.3 244.2h0M450.9 245.8h0M236.1 377.4h0M26.7 122.0h0M670.7 388.9h0M519.4 295.1h0M345.5 30.5h0M665.3 47.0h0M390.9 230.9h0M127.1 347.2h0M357.3 196.7h0M469.4 447.1h0M116.7 351.0h0M90.4 375.7h0M629.8 187.7h0M277.8 399.2h0M17.3 173.2h0M186.4 295.1h0M47.4 404.5h0M272.2 304.6h0M370.4 197.0h0M373.3 425.3h0M459.2 340.6h0M633.9 196.6h0M83.5 76.2h0M124.1 448.3h0M191.5 49.0h0M136.0 124.5h0M305.4 445.7h0M731.5 113.7h0M192.0 288.4h0M633.4 90.2h0M158.6 379.7h0M380.2 160.0h0M110.8 259.7h0M430.9 422.4h0M358.7 275.2h0M676.1 360.2h0M180.0 372.3h0M586.9 289.0h0M379.4 157.4h0M664.2 340.6h0M276.9 95.2h0M282.6 326.2h0M143.6 311.5h0M548.1 348.0h0M714.5 99.7h0M687.3 367.8h0M475.9 226.5h0M559.1 103.1h0M363.5 171.8h0M403.9 214.5h0M427.9 80.3h0M619.9 385.8h0M629.8 110.5h0M452.3 176.2h0M46.0 299.5h0M263.7 199.0h0M733.7 82.5h0M445.7 83.0h0M178.5 225.6h0M203.6 68.6h0M723.8 236.1h0M668.8 435.0h0M552.1 53.1h0M237.8 127.8h0M714.4 352.3h0M132.1 440.4h0M715.8 414.1h0M81.7 395.7h0M330.8 99.3h0M357.7 133.8h0M599.7 207.2h0M386.3 76.7h0M452.8 345.3h0M74.3 99.4h0M370.1 376.0h0M589.3 212.6h0M552.8 59.6h0M205.7 48.5h0M692.4 178.6h0M534.1 447.6h0M108.8 218.4h0M647.5 47.1h0M155.4 391.0h0M533.6 409.9h0M635.1 337.6h0M243.4 156.7h0M173.0 358.2h0M478.1 384.8h0M90.6 413.0h0M194.1 333.8h0M157.4 273.0h0M138.8 295.7h0M374.7 323.0h0M95.8 449.7h0M422.6 167.5h0M611.8 385.1h0M519.9 312.9h0M454.1 440.6h0M261.7 187.8h0M713.1 140.1h0M31.0 333.7h0M94.4 363.9h0M130.7 296.4h0M91.3 88.6h0M403.6 338.3h0M274.3 387.2h0M471.7 366.8h0M200.5 358.7h0M481.8 152.2h0M380.8 193.6h0M549.2 294.1h0M405.3 215.6h0M276.1 345.1h0M655.2 233.3h0M264.6 363.6h0M543.1 97.2h0M279.2 126.7h0M561.4 297.5h0M26.2 408.3h0M684.9 295.9h0M460.1 277.6h0M332.8 432.0h0M237.4 180.3h0M410.0 210.9h0M19.8 241.2h0M198.9 246.3h0M446.2 375.7h0M179.5 261.0h0M629.3 361.2h0M114.3 303.6h0M652.4 400.5h0M369.4 126.8h0M493.5 86.8h0M231.5 370.9h0M520.3 39.3h0M158.4 217.5h0M343.2 345.6h0M725.9 399.9h0M523.6 388.7h0M368.1 252.2h0M278.3 140.2h0M571.6 279.8h0"/><path stroke="#2a1e0c" stroke-width="1.8" stroke-linecap="round" fill="none" d="M100.0 189.7h0M216.3 100.4h0M64.7 35.5h0M16.8 286.9h0M722.1 414.3h0M205.1 346.5h0M471.9 248.1h0M227.3 74.7h0M568.8 389.0h0M69.6 313.3h0M341.3 78.6h0M334.9 197.0h0M149.4 390.2h0M166.5 82.2h0M419.3 256.3h0M29.2 196.9h0M696.2 254.5h0M294.3 366.5h0M547.7 257.6h0M538.2 306.9h0M172.5 382.3h0M664.6 56.5h0M392.3 160.2h0M736.8 304.2h0M455.5 434.5h0M221.7 435.7h0M470.7 35.5h0M573.8 70.6h0M383.1 272.0h0M384.1 175.2h0M242.9 334.0h0M689.7 387.7h0M671.4 421.4h0M478.3 343.6h0M481.7 354.7h0M138.1 300.7h0M733.5 237.2h0M523.0 55.1h0M253.4 333.9h0M583.0 295.0h0M84.9 28.8h0M176.1 106.4h0M456.0 413.9h0M92.6 280.0h0M226.2 203.2h0M309.7 321.3h0M423.3 79.4h0M701.3 426.3h0M501.6 400.2h0M499.7 75.4h0M698.7 127.3h0M613.1 202.5h0M559.8 135.5h0M413.2 428.8h0M138.1 240.3h0M130.9 62.0h0M9.3 337.2h0M503.4 101.6h0M389.3 396.1h0M509.8 59.6h0M30.3 299.7h0M90.6 317.2h0M60.8 427.6h0M447.5 135.5h0M264.4 139.0h0M70.3 287.8h0M675.8 133.8h0M58.8 162.0h0M621.0 91.9h0M11.0 384.6h0M359.8 249.1h0M411.0 329.0h0M729.5 357.3h0M5.4 121.7h0M463.7 79.2h0M720.2 425.4h0M326.7 55.6h0M91.8 70.9h0M93.9 320.2h0M477.8 83.0h0M561.5 137.6h0M278.5 29.7h0M607.2 338.1h0M112.8 180.9h0M529.1 321.1h0M250.4 48.2h0M120.3 88.2h0M77.2 154.8h0M461.7 144.7h0M151.3 101.3h0M625.4 258.4h0M519.1 267.8h0M590.4 216.9h0M279.8 52.2h0M429.2 200.6h0M369.6 259.1h0M149.4 225.6h0M331.0 255.1h0M355.5 72.2h0M175.1 266.7h0M200.6 118.6h0M304.2 321.1h0M253.8 450.0h0M471.7 294.5h0M50.2 92.8h0M105.8 190.5h0M12.6 81.7h0M426.2 330.9h0M246.5 271.1h0M150.1 344.5h0M559.7 122.7h0M434.4 110.0h0M318.6 146.3h0M378.0 65.4h0M223.7 173.8h0M282.2 172.1h0M413.2 204.2h0M332.3 222.7h0M639.6 310.4h0M381.8 65.7h0M667.0 368.4h0M72.6 288.4h0M704.9 190.0h0M314.8 138.3h0M556.1 70.0h0M341.2 226.9h0M301.6 220.2h0M234.3 302.9h0M267.0 208.6h0"/><path stroke="#2a1e0c" stroke-width="2.6" stroke-linecap="round" fill="none" d="M534.6 93.2h0M377.6 134.2h0M93.2 229.2h0M656.6 441.7h0M271.1 44.9h0M243.3 422.1h0M532.1 373.0h0M109.6 245.0h0M388.2 149.0h0M459.5 330.3h0M154.8 184.2h0M658.3 365.9h0M56.1 116.4h0M60.2 154.8h0M234.1 195.4h0M60.7 140.4h0M328.2 392.2h0M39.4 358.4h0M236.3 49.2h0M415.6 95.6h0M11.8 295.4h0M372.6 384.4h0M403.7 134.6h0M512.7 373.5h0M182.9 236.7h0M716.1 314.3h0M348.3 233.9h0M176.4 235.3h0M272.3 147.1h0M506.8 203.8h0M733.2 319.3h0M585.6 27.5h0M437.3 70.5h0M726.7 391.1h0M273.0 335.2h0M700.1 72.7h0M260.6 85.7h0M360.9 276.4h0M23.6 377.8h0M499.8 400.2h0M56.5 157.2h0M137.0 435.2h0M353.4 73.5h0M295.5 237.0h0M675.9 316.5h0M511.7 347.4h0M350.8 202.4h0M297.0 301.5h0M288.4 276.3h0M549.4 351.1h0M201.0 308.8h0M589.3 214.4h0M453.0 31.2h0M302.0 186.3h0M97.5 83.7h0M413.4 139.8h0M113.4 147.9h0M256.5 300.8h0M287.7 436.7h0M630.0 285.3h0M517.4 124.6h0M454.6 53.0h0M137.0 110.9h0M267.8 421.4h0M377.3 88.4h0M440.3 208.6h0M648.8 444.0h0M695.4 173.3h0M245.5 339.5h0M140.6 190.9h0M466.5 356.8h0M208.8 62.3h0M554.1 444.9h0M443.1 288.8h0M162.8 397.3h0M6.3 54.6h0M67.1 404.2h0M622.4 160.7h0M690.3 407.5h0M165.2 302.2h0M643.1 250.9h0M117.8 191.3h0M369.6 295.8h0M249.1 328.6h0M341.2 348.6h0M573.0 331.6h0M113.3 132.7h0M689.6 70.9h0M260.4 102.2h0M221.5 441.1h0M698.5 329.7h0M96.3 208.0h0M650.4 411.3h0M215.2 222.1h0M110.4 43.5h0M42.2 435.3h0M447.9 260.2h0M161.7 325.7h0M233.8 307.7h0M487.1 30.9h0M685.2 47.0h0M497.0 384.2h0M692.3 226.7h0M38.4 46.9h0M283.0 296.1h0M715.7 296.0h0M230.0 399.7h0M662.6 139.1h0M423.1 235.5h0M266.4 166.7h0M668.9 178.8h0M234.6 408.4h0M520.2 211.5h0M321.5 59.0h0M76.7 51.0h0M274.5 343.1h0M560.8 270.2h0M38.0 309.6h0M295.3 83.6h0M134.8 64.6h0M582.8 232.9h0M698.3 444.9h0M132.3 321.9h0M300.2 373.9h0M434.2 62.0h0M596.4 26.0h0M293.7 38.6h0"/><path stroke="#4c4238" stroke-opacity="0.3" stroke-width="3.9" stroke-linecap="round" fill="none" d="M307.1 93.3h0M50.0 294.7h0M439.4 104.3h0M632.2 397.0h0M697.9 395.3h0M298.6 132.4h0M515.0 185.9h0M132.8 184.0h0M35.5 434.2h0M285.3 104.0h0M85.4 175.7h0M392.5 113.9h0"/><path stroke="#4c4238" stroke-width="2.1" stroke-linecap="round" fill="none" d="M307.1 93.3h0M50.0 294.7h0M439.4 104.3h0M632.2 397.0h0M697.9 395.3h0M298.6 132.4h0M515.0 185.9h0M132.8 184.0h0M35.5 434.2h0M285.3 104.0h0M85.4 175.7h0M392.5 113.9h0"/><path stroke="#643c14" stroke-opacity="0.3" stroke-width="3.9" stroke-linecap="round" fill="none" d="M564.6 170.8h0M560.8 167.4h0M338.0 381.4h0M410.3 204.3h0M339.3 133.9h0M210.2 432.6h0M462.8 397.3h0M653.4 357.4h0M629.6 39.8h0M599.6 349.2h0M93.1 73.6h0M2.5 370.8h0"/><path stroke="#643c14" stroke-width="2.1" stroke-linecap="round" fill="none" d="M564.6 170.8h0M560.8 167.4h0M338.0 381.4h0M410.3 204.3h0M339.3 133.9h0M210.2 432.6h0M462.8 397.3h0M653.4 357.4h0M629.6 39.8h0M599.6 349.2h0M93.1 73.6h0M2.5 370.8h0"/><path stroke="#503618" stroke-opacity="0.3" stroke-width="3.9" stroke-linecap="round" fill="none" d="M248.7 317.6h0M613.0 272.5h0M333.7 428.4h0M288.8 321.2h0M44.2 148.2h0M134.1 105.3h0M458.5 238.6h0M94.7 45.4h0M372.2 247.4h0M8.0 296.3h0M445.9 31.1h0M670.8 242.2h0M65.1 28.5h0M298.6 159.3h0M658.1 212.1h0M367.3 377.8h0M395.0 142.1h0M218.4 312.1h0M440.7 436.9h0M532.6 121.5h0"/><path stroke="#503618" stroke-width="2.1" stroke-linecap="round" fill="none" d="M248.7 317.6h0M613.0 272.5h0M333.7 428.4h0M288.8 321.2h0M44.2 148.2h0M134.1 105.3h0M458.5 238.6h0M94.7 45.4h0M372.2 247.4h0M8.0 296.3h0M445.9 31.1h0M670.8 242.2h0M65.1 28.5h0M298.6 159.3h0M658.1 212.1h0M367.3 377.8h0M395.0 142.1h0M218.4 312.1h0M440.7 436.9h0M532.6 121.5h0"/><path stroke="#503618" stroke-opacity="0.3" stroke-width="3.3" stroke-linecap="round" fill="none" d="M502.1 364.0h0M66.4 220.6h0M159.9 404.6h0M585.9 219.5h0M439.3 59.9h0M283.9 96.3h0M205.3 432.8h0M183.2 55.7h0M661.1 112.6h0M559.9 126.0h0M524.7 286.4h0M75.9 60.8h0M357.6 325.7h0M237.8 156.5h0M65.4 420.3h0M113.0 402.4h0M576.9 35.4h0M92.9 136.9h0M287.4 242.4h0M104.9 54.8h0M519.4 74.9h0"/><path stroke="#503618" stroke-width="1.5" stroke-linecap="round" fill="none" d="M502.1 364.0h0M66.4 220.6h0M159.9 404.6h0M585.9 219.5h0M439.3 59.9h0M283.9 96.3h0M205.3 432.8h0M183.2 55.7h0M661.1 112.6h0M559.9 126.0h0M524.7 286.4h0M75.9 60.8h0M357.6 325.7h0M237.8 156.5h0M65.4 420.3h0M113.0 402.4h0M576.9 35.4h0M92.9 136.9h0M287.4 242.4h0M104.9 54.8h0M519.4 74.9h0"/><path stroke="#443828" stroke-opacity="0.3" stroke-width="3.9" stroke-linecap="round" fill="none" d="M585.0 196.0h0M366.9 186.9h0M185.5 159.8h0M237.5 421.6h0M184.6 375.6h0M615.8 162.4h0M226.4 295.8h0M239.4 241.3h0M571.2 74.1h0M149.3 80.7h0M483.6 307.8h0M653.6 41.7h0M245.7 240.1h0"/><path stroke="#443828" stroke-width="2.1" stroke-linecap="round" fill="none" d="M585.0 196.0h0M366.9 186.9h0M185.5 159.8h0M237.5 421.6h0M184.6 375.6h0M615.8 162.4h0M226.4 295.8h0M239.4 241.3h0M571.2 74.1h0M149.3 80.7h0M483.6 307.8h0M653.6 41.7h0M245.7 240.1h0"/><path stroke="#5a3e1c" stroke-opacity="0.3" stroke-width="3.3" stroke-linecap="round" fill="none" d="M300.9 104.5h0M386.8 204.8h0M444.0 50.0h0M226.1 226.0h0M324.4 65.0h0M129.6 133.5h0M12.2 373.4h0M102.0 407.9h0M227.6 351.8h0M56.0 408.6h0M418.0 200.6h0M134.6 187.3h0M203.4 234.5h0M264.0 40.8h0M565.8 283.4h0M609.3 352.2h0M707.0 434.7h0M197.5 410.4h0M255.4 250.4h0M627.4 285.8h0M408.3 70.3h0M707.7 399.8h0M312.7 223.2h0M700.5 348.8h0"/><path stroke="#5a3e1c" stroke-width="1.5" stroke-linecap="round" fill="none" d="M300.9 104.5h0M386.8 204.8h0M444.0 50.0h0M226.1 226.0h0M324.4 65.0h0M129.6 133.5h0M12.2 373.4h0M102.0 407.9h0M227.6 351.8h0M56.0 408.6h0M418.0 200.6h0M134.6 187.3h0M203.4 234.5h0M264.0 40.8h0M565.8 283.4h0M609.3 352.2h0M707.0 434.7h0M197.5 410.4h0M255.4 250.4h0M627.4 285.8h0M408.3 70.3h0M707.7 399.8h0M312.7 223.2h0M700.5 348.8h0"/><path stroke="#604820" stroke-opacity="0.3" stroke-width="3.9" stroke-linecap="round" fill="none" d="M291.2 94.8h0M686.5 332.6h0M545.5 53.2h0M312.7 340.7h0M154.3 388.5h0M563.9 197.9h0M166.1 240.9h0M207.3 207.7h0M394.9 289.1h0M93.6 325.0h0M30.1 238.4h0M249.7 267.1h0M715.8 272.5h0M20.0 302.3h0M582.6 195.7h0"/><path stroke="#604820" stroke-width="2.1" stroke-linecap="round" fill="none" d="M291.2 94.8h0M686.5 332.6h0M545.5 53.2h0M312.7 340.7h0M154.3 388.5h0M563.9 197.9h0M166.1 240.9h0M207.3 207.7h0M394.9 289.1h0M93.6 325.0h0M30.1 238.4h0M249.7 267.1h0M715.8 272.5h0M20.0 302.3h0M582.6 195.7h0"/><path stroke="#643c14" stroke-opacity="0.3" stroke-width="3.6" stroke-linecap="round" fill="none" d="M478.8 60.4h0M217.7 234.5h0M725.2 123.2h0M551.8 181.9h0M249.7 256.9h0M524.8 224.5h0M384.7 218.8h0M230.6 256.0h0M193.8 184.0h0M310.4 113.5h0M667.0 107.9h0"/><path stroke="#643c14" stroke-width="1.8" stroke-linecap="round" fill="none" d="M478.8 60.4h0M217.7 234.5h0M725.2 123.2h0M551.8 181.9h0M249.7 256.9h0M524.8 224.5h0M384.7 218.8h0M230.6 256.0h0M193.8 184.0h0M310.4 113.5h0M667.0 107.9h0"/><path stroke="#604820" stroke-opacity="0.3" stroke-width="3.6" stroke-linecap="round" fill="none" d="M102.6 84.9h0M549.7 281.3h0M581.8 350.6h0M87.8 330.8h0M306.0 387.8h0M423.1 179.5h0M127.8 100.7h0M67.1 449.2h0M275.1 168.1h0M326.7 243.8h0M222.2 113.2h0M388.8 391.3h0M506.9 270.0h0M426.6 92.2h0M356.5 57.5h0M329.4 224.7h0M320.4 384.1h0M35.6 356.2h0M191.4 319.2h0M372.5 334.6h0"/><path stroke="#604820" stroke-width="1.8" stroke-linecap="round" fill="none" d="M102.6 84.9h0M549.7 281.3h0M581.8 350.6h0M87.8 330.8h0M306.0 387.8h0M423.1 179.5h0M127.8 100.7h0M67.1 449.2h0M275.1 168.1h0M326.7 243.8h0M222.2 113.2h0M388.8 391.3h0M506.9 270.0h0M426.6 92.2h0M356.5 57.5h0M329.4 224.7h0M320.4 384.1h0M35.6 356.2h0M191.4 319.2h0M372.5 334.6h0"/><path stroke="#4c4238" stroke-opacity="0.3" stroke-width="3.6" stroke-linecap="round" fill="none" d="M722.3 413.4h0M194.0 350.4h0M481.9 238.9h0M373.1 96.6h0M716.3 26.7h0M663.7 225.7h0M539.6 365.1h0M232.1 71.8h0M422.7 331.1h0M605.2 81.1h0M341.7 103.7h0M559.5 423.7h0M275.6 71.8h0M228.6 203.0h0"/><path stroke="#4c4238" stroke-width="1.8" stroke-linecap="round" fill="none" d="M722.3 413.4h0M194.0 350.4h0M481.9 238.9h0M373.1 96.6h0M716.3 26.7h0M663.7 225.7h0M539.6 365.1h0M232.1 71.8h0M422.7 331.1h0M605.2 81.1h0M341.7 103.7h0M559.5 423.7h0M275.6 71.8h0M228.6 203.0h0"/><path stroke="#643c14" stroke-opacity="0.3" stroke-width="3.3" stroke-linecap="round" fill="none" d="M306.2 205.0h0M706.2 350.2h0M41.3 77.6h0M321.4 250.7h0M450.3 312.8h0M208.8 186.4h0M707.9 279.2h0M727.5 285.8h0M221.8 220.2h0M503.9 124.0h0M363.4 204.6h0M324.7 45.9h0M222.4 352.6h0M283.3 31.9h0M36.5 436.4h0M261.8 259.2h0M25.8 229.2h0M703.0 104.6h0M434.4 400.6h0M417.2 144.0h0"/><path stroke="#643c14" stroke-width="1.5" stroke-linecap="round" fill="none" d="M306.2 205.0h0M706.2 350.2h0M41.3 77.6h0M321.4 250.7h0M450.3 312.8h0M208.8 186.4h0M707.9 279.2h0M727.5 285.8h0M221.8 220.2h0M503.9 124.0h0M363.4 204.6h0M324.7 45.9h0M222.4 352.6h0M283.3 31.9h0M36.5 436.4h0M261.8 259.2h0M25.8 229.2h0M703.0 104.6h0M434.4 400.6h0M417.2 144.0h0"/><path stroke="#503618" stroke-opacity="0.3" stroke-width="3.6" stroke-linecap="round" fill="none" d="M155.9 45.1h0M540.1 342.1h0M552.3 301.0h0M369.3 225.6h0M417.6 109.5h0M311.9 71.2h0M673.2 179.1h0M190.4 240.5h0M496.4 157.6h0M165.3 182.5h0M75.4 122.4h0M258.8 84.5h0M199.5 172.9h0M165.5 144.2h0M463.5 155.9h0M145.7 326.7h0M329.6 207.2h0M342.2 61.7h0M342.6 432.2h0"/><path stroke="#503618" stroke-width="1.8" stroke-linecap="round" fill="none" d="M155.9 45.1h0M540.1 342.1h0M552.3 301.0h0M369.3 225.6h0M417.6 109.5h0M311.9 71.2h0M673.2 179.1h0M190.4 240.5h0M496.4 157.6h0M165.3 182.5h0M75.4 122.4h0M258.8 84.5h0M199.5 172.9h0M165.5 144.2h0M463.5 155.9h0M145.7 326.7h0M329.6 207.2h0M342.2 61.7h0M342.6 432.2h0"/><path stroke="#5a3e1c" stroke-opacity="0.3" stroke-width="3.9" stroke-linecap="round" fill="none" d="M271.8 74.1h0M58.3 310.1h0M378.3 141.5h0M292.7 168.2h0M686.5 210.3h0M355.2 222.3h0M632.7 410.5h0M657.2 411.0h0M162.1 201.0h0M32.9 186.3h0M676.2 85.0h0M57.3 177.1h0M236.7 359.3h0M1.9 287.2h0M58.3 315.0h0M472.0 95.7h0M104.7 193.2h0M496.1 373.9h0M54.9 342.5h0M229.3 338.7h0M613.3 255.7h0"/><path stroke="#5a3e1c" stroke-width="2.1" stroke-linecap="round" fill="none" d="M271.8 74.1h0M58.3 310.1h0M378.3 141.5h0M292.7 168.2h0M686.5 210.3h0M355.2 222.3h0M632.7 410.5h0M657.2 411.0h0M162.1 201.0h0M32.9 186.3h0M676.2 85.0h0M57.3 177.1h0M236.7 359.3h0M1.9 287.2h0M58.3 315.0h0M472.0 95.7h0M104.7 193.2h0M496.1 373.9h0M54.9 342.5h0M229.3 338.7h0M613.3 255.7h0"/><path stroke="#4c4238" stroke-opacity="0.3" stroke-width="3.3" stroke-linecap="round" fill="none" d="M321.4 47.1h0M200.1 412.2h0M711.6 279.4h0M38.0 363.7h0M121.1 316.4h0M327.8 133.4h0M113.2 205.6h0M329.9 272.0h0M664.7 365.7h0M513.7 117.9h0M506.6 185.7h0M255.1 424.7h0M696.2 168.1h0M640.2 219.2h0M92.4 342.8h0M659.2 417.3h0M1.6 86.7h0M133.2 341.0h0M203.5 136.7h0M125.9 73.0h0M540.3 392.2h0"/><path stroke="#4c4238" stroke-width="1.5" stroke-linecap="round" fill="none" d="M321.4 47.1h0M200.1 412.2h0M711.6 279.4h0M38.0 363.7h0M121.1 316.4h0M327.8 133.4h0M113.2 205.6h0M329.9 272.0h0M664.7 365.7h0M513.7 117.9h0M506.6 185.7h0M255.1 424.7h0M696.2 168.1h0M640.2 219.2h0M92.4 342.8h0M659.2 417.3h0M1.6 86.7h0M133.2 341.0h0M203.5 136.7h0M125.9 73.0h0M540.3 392.2h0"/><path stroke="#443828" stroke-opacity="0.3" stroke-width="3.3" stroke-linecap="round" fill="none" d="M475.5 381.5h0M172.3 59.9h0M371.0 318.0h0M470.5 324.5h0M646.8 45.0h0M658.5 261.4h0M251.1 157.4h0M595.9 159.1h0M164.1 418.8h0M506.4 372.9h0M730.0 268.2h0M723.3 39.0h0M586.1 48.2h0M294.5 284.4h0M403.3 28.3h0"/><path stroke="#443828" stroke-width="1.5" stroke-linecap="round" fill="none" d="M475.5 381.5h0M172.3 59.9h0M371.0 318.0h0M470.5 324.5h0M646.8 45.0h0M658.5 261.4h0M251.1 157.4h0M595.9 159.1h0M164.1 418.8h0M506.4 372.9h0M730.0 268.2h0M723.3 39.0h0M586.1 48.2h0M294.5 284.4h0M403.3 28.3h0"/><path stroke="#604820" stroke-opacity="0.3" stroke-width="3.3" stroke-linecap="round" fill="none" d="M661.1 32.0h0M421.3 169.6h0M50.7 219.2h0M172.6 172.3h0M10.0 112.2h0M49.8 152.5h0M53.0 276.0h0M272.3 213.5h0M629.1 343.4h0M368.8 72.1h0M52.5 217.2h0M656.2 278.7h0M11.4 32.9h0"/><path stroke="#604820" stroke-width="1.5" stroke-linecap="round" fill="none" d="M661.1 32.0h0M421.3 169.6h0M50.7 219.2h0M172.6 172.3h0M10.0 112.2h0M49.8 152.5h0M53.0 276.0h0M272.3 213.5h0M629.1 343.4h0M368.8 72.1h0M52.5 217.2h0M656.2 278.7h0M11.4 32.9h0"/><path stroke="#443828" stroke-opacity="0.3" stroke-width="3.6" stroke-linecap="round" fill="none" d="M108.6 315.9h0M339.0 171.9h0M350.3 224.9h0M474.7 443.2h0M286.1 148.8h0M157.3 341.6h0M326.5 392.3h0M42.8 83.7h0M8.4 377.7h0M251.6 148.4h0M644.2 41.3h0M619.4 315.4h0M466.5 28.5h0M308.4 263.0h0"/><path stroke="#443828" stroke-width="1.8" stroke-linecap="round" fill="none" d="M108.6 315.9h0M339.0 171.9h0M350.3 224.9h0M474.7 443.2h0M286.1 148.8h0M157.3 341.6h0M326.5 392.3h0M42.8 83.7h0M8.4 377.7h0M251.6 148.4h0M644.2 41.3h0M619.4 315.4h0M466.5 28.5h0M308.4 263.0h0"/><path stroke="#5a3e1c" stroke-opacity="0.3" stroke-width="3.6" stroke-linecap="round" fill="none" d="M367.0 207.7h0M209.7 379.7h0M480.1 242.0h0M98.5 406.4h0M336.8 383.3h0M109.4 439.7h0M659.6 97.6h0M375.7 243.6h0M111.8 155.6h0M566.5 110.5h0M125.1 220.2h0M40.8 166.4h0M664.7 170.7h0M278.1 406.3h0M103.7 237.3h0"/><path stroke="#5a3e1c" stroke-width="1.8" stroke-linecap="round" fill="none" d="M367.0 207.7h0M209.7 379.7h0M480.1 242.0h0M98.5 406.4h0M336.8 383.3h0M109.4 439.7h0M659.6 97.6h0M375.7 243.6h0M111.8 155.6h0M566.5 110.5h0M125.1 220.2h0M40.8 166.4h0M664.7 170.7h0M278.1 406.3h0M103.7 237.3h0"/><path stroke="#b0a8a0" stroke-opacity="0.35" stroke-width="4" stroke-linecap="round" fill="none" d="M226.9 402.1h0M182.2 282.1h0"/><path stroke="#b0a8a0" stroke-width="2.2" stroke-linecap="round" fill="none" d="M226.9 402.1h0M182.2 282.1h0"/><path stroke="#b0a8a0" stroke-opacity="0.35" stroke-width="3.3" stroke-linecap="round" fill="none" d="M368.1 39.7h0M642.8 412.0h0M589.2 116.2h0M218.7 101.8h0M635.8 199.8h0M225.0 125.7h0M278.4 137.7h0M533.8 174.0h0"/><path stroke="#b0a8a0" stroke-width="1.5" stroke-linecap="round" fill="none" d="M368.1 39.7h0M642.8 412.0h0M589.2 116.2h0M218.7 101.8h0M635.8 199.8h0M225.0 125.7h0M278.4 137.7h0M533.8 174.0h0"/><path stroke="#b88038" stroke-opacity="0.35" stroke-width="3.7" stroke-linecap="round" fill="none" d="M726.0 440.4h0M163.5 108.9h0M334.7 203.5h0M66.8 374.2h0M44.3 55.2h0M440.3 415.3h0M394.5 90.2h0M408.0 435.5h0M582.8 210.8h0"/><path stroke="#b88038" stroke-width="1.9" stroke-linecap="round" fill="none" d="M726.0 440.4h0M163.5 108.9h0M334.7 203.5h0M66.8 374.2h0M44.3 55.2h0M440.3 415.3h0M394.5 90.2h0M408.0 435.5h0M582.8 210.8h0"/><path stroke="#a09098" stroke-opacity="0.35" stroke-width="3.7" stroke-linecap="round" fill="none" d="M514.4 122.2h0M476.3 86.7h0"/><path stroke="#a09098" stroke-width="1.9" stroke-linecap="round" fill="none" d="M514.4 122.2h0M476.3 86.7h0"/><path stroke="#b0a8a0" stroke-opacity="0.35" stroke-width="3.7" stroke-linecap="round" fill="none" d="M497.5 345.6h0M354.9 121.3h0M717.5 323.4h0M621.6 345.3h0M74.2 399.7h0M403.1 91.1h0M718.4 63.8h0"/><path stroke="#b0a8a0" stroke-width="1.9" stroke-linecap="round" fill="none" d="M497.5 345.6h0M354.9 121.3h0M717.5 323.4h0M621.6 345.3h0M74.2 399.7h0M403.1 91.1h0M718.4 63.8h0"/><path stroke="#a09098" stroke-opacity="0.35" stroke-width="3.3" stroke-linecap="round" fill="none" d="M627.1 312.3h0M649.5 333.2h0M156.5 148.5h0M710.7 74.8h0"/><path stroke="#a09098" stroke-width="1.5" stroke-linecap="round" fill="none" d="M627.1 312.3h0M649.5 333.2h0M156.5 148.5h0M710.7 74.8h0"/><path stroke="#b88038" stroke-opacity="0.35" stroke-width="3.3" stroke-linecap="round" fill="none" d="M729.6 164.5h0M666.0 285.7h0M715.7 416.7h0M584.2 145.7h0M29.8 337.8h0M476.1 444.4h0M104.3 99.7h0"/><path stroke="#b88038" stroke-width="1.5" stroke-linecap="round" fill="none" d="M729.6 164.5h0M666.0 285.7h0M715.7 416.7h0M584.2 145.7h0M29.8 337.8h0M476.1 444.4h0M104.3 99.7h0"/><path stroke="#c09048" stroke-opacity="0.35" stroke-width="3.7" stroke-linecap="round" fill="none" d="M79.6 448.1h0M309.3 138.4h0M324.5 129.3h0M415.0 168.6h0M406.5 423.3h0M8.1 72.3h0M503.4 446.8h0M708.5 224.6h0M300.7 271.7h0M103.5 273.1h0"/><path stroke="#c09048" stroke-width="1.9" stroke-linecap="round" fill="none" d="M79.6 448.1h0M309.3 138.4h0M324.5 129.3h0M415.0 168.6h0M406.5 423.3h0M8.1 72.3h0M503.4 446.8h0M708.5 224.6h0M300.7 271.7h0M103.5 273.1h0"/><path stroke="#c09048" stroke-opacity="0.35" stroke-width="4" stroke-linecap="round" fill="none" d="M100.4 46.1h0M225.8 220.0h0M715.3 124.5h0"/><path stroke="#c09048" stroke-width="2.2" stroke-linecap="round" fill="none" d="M100.4 46.1h0M225.8 220.0h0M715.3 124.5h0"/><path stroke="#a09098" stroke-opacity="0.35" stroke-width="4" stroke-linecap="round" fill="none" d="M496.6 449.7h0M103.7 64.2h0M657.9 265.8h0"/><path stroke="#a09098" stroke-width="2.2" stroke-linecap="round" fill="none" d="M496.6 449.7h0M103.7 64.2h0M657.9 265.8h0"/><path stroke="#c89030" stroke-opacity="0.35" stroke-width="3.3" stroke-linecap="round" fill="none" d="M0.6 323.1h0M582.1 287.5h0M198.4 366.7h0M94.3 114.5h0"/><path stroke="#c89030" stroke-width="1.5" stroke-linecap="round" fill="none" d="M0.6 323.1h0M582.1 287.5h0M198.4 366.7h0M94.3 114.5h0"/><path stroke="#c89030" stroke-opacity="0.35" stroke-width="3.7" stroke-linecap="round" fill="none" d="M441.7 358.4h0M566.8 431.6h0M410.5 410.8h0M393.5 110.1h0M239.8 100.2h0M541.5 336.8h0M715.7 181.1h0"/><path stroke="#c89030" stroke-width="1.9" stroke-linecap="round" fill="none" d="M441.7 358.4h0M566.8 431.6h0M410.5 410.8h0M393.5 110.1h0M239.8 100.2h0M541.5 336.8h0M715.7 181.1h0"/><path stroke="#a89880" stroke-opacity="0.35" stroke-width="4" stroke-linecap="round" fill="none" d="M632.2 127.5h0M13.5 129.8h0M156.2 228.9h0M35.3 217.6h0"/><path stroke="#a89880" stroke-width="2.2" stroke-linecap="round" fill="none" d="M632.2 127.5h0M13.5 129.8h0M156.2 228.9h0M35.3 217.6h0"/><path stroke="#a89880" stroke-opacity="0.35" stroke-width="3.3" stroke-linecap="round" fill="none" d="M146.2 377.5h0M100.0 212.2h0M658.6 63.8h0"/><path stroke="#a89880" stroke-width="1.5" stroke-linecap="round" fill="none" d="M146.2 377.5h0M100.0 212.2h0M658.6 63.8h0"/><path stroke="#b88038" stroke-opacity="0.35" stroke-width="4" stroke-linecap="round" fill="none" d="M183.7 26.7h0M440.6 203.0h0"/><path stroke="#b88038" stroke-width="2.2" stroke-linecap="round" fill="none" d="M183.7 26.7h0M440.6 203.0h0"/><path stroke="#c09048" stroke-opacity="0.35" stroke-width="3.3" stroke-linecap="round" fill="none" d="M178.8 418.9h0M600.9 227.0h0M702.4 150.3h0M163.0 242.5h0M341.8 405.0h0"/><path stroke="#c09048" stroke-width="1.5" stroke-linecap="round" fill="none" d="M178.8 418.9h0M600.9 227.0h0M702.4 150.3h0M163.0 242.5h0M341.8 405.0h0"/><path stroke="#a89880" stroke-opacity="0.35" stroke-width="3.7" stroke-linecap="round" fill="none" d="M601.7 170.2h0M731.1 129.3h0"/><path stroke="#a89880" stroke-width="1.9" stroke-linecap="round" fill="none" d="M601.7 170.2h0M731.1 129.3h0"/><path stroke="#c89030" stroke-opacity="0.35" stroke-width="4" stroke-linecap="round" fill="none" d="M681.1 54.2h0M375.9 299.9h0M185.8 434.8h0"/><path stroke="#c89030" stroke-width="2.2" stroke-linecap="round" fill="none" d="M681.1 54.2h0M375.9 299.9h0M185.8 434.8h0"/><path stroke="#d84c1c" stroke-opacity="0.3" stroke-width="3.2" stroke-linecap="round" fill="none" d="M290.0 330.3h0M540.4 202.6h0M224.9 124.6h0M262.4 110.5h0M629.7 359.8h0M497.0 219.4h0M209.9 243.2h0M712.4 276.0h0"/><path stroke="#d84c1c" stroke-width="1.4" stroke-linecap="round" fill="none" d="M290.0 330.3h0M540.4 202.6h0M224.9 124.6h0M262.4 110.5h0M629.7 359.8h0M497.0 219.4h0M209.9 243.2h0M712.4 276.0h0"/><path stroke="#c83414" stroke-opacity="0.3" stroke-width="3.2" stroke-linecap="round" fill="none" d="M36.0 408.6h0M424.2 330.3h0M587.2 349.6h0M629.6 86.5h0M214.3 311.7h0M451.1 49.6h0M397.1 85.8h0"/><path stroke="#c83414" stroke-width="1.4" stroke-linecap="round" fill="none" d="M36.0 408.6h0M424.2 330.3h0M587.2 349.6h0M629.6 86.5h0M214.3 311.7h0M451.1 49.6h0M397.1 85.8h0"/><path stroke="#c83414" stroke-opacity="0.3" stroke-width="3.5" stroke-linecap="round" fill="none" d="M116.1 258.6h0M450.7 417.0h0M445.2 89.8h0M209.4 149.9h0M330.0 157.0h0M547.9 316.6h0"/><path stroke="#c83414" stroke-width="1.7" stroke-linecap="round" fill="none" d="M116.1 258.6h0M450.7 417.0h0M445.2 89.8h0M209.4 149.9h0M330.0 157.0h0M547.9 316.6h0"/><path stroke="#d84c1c" stroke-opacity="0.3" stroke-width="3.5" stroke-linecap="round" fill="none" d="M451.0 147.0h0M143.1 50.5h0M540.7 414.0h0M305.9 405.4h0M345.9 177.0h0M161.6 237.9h0M146.0 135.2h0"/><path stroke="#d84c1c" stroke-width="1.7" stroke-linecap="round" fill="none" d="M451.0 147.0h0M143.1 50.5h0M540.7 414.0h0M305.9 405.4h0M345.9 177.0h0M161.6 237.9h0M146.0 135.2h0"/><path stroke="#b83c1c" stroke-opacity="0.3" stroke-width="3.2" stroke-linecap="round" fill="none" d="M250.8 393.2h0M248.8 70.5h0"/><path stroke="#b83c1c" stroke-width="1.4" stroke-linecap="round" fill="none" d="M250.8 393.2h0M248.8 70.5h0"/><path stroke="#b83c1c" stroke-opacity="0.3" stroke-width="3.5" stroke-linecap="round" fill="none" d="M164.0 362.2h0M26.0 218.6h0M170.3 414.6h0M228.0 43.4h0M491.4 376.8h0M338.9 82.4h0"/><path stroke="#b83c1c" stroke-width="1.7" stroke-linecap="round" fill="none" d="M164.0 362.2h0M26.0 218.6h0M170.3 414.6h0M228.0 43.4h0M491.4 376.8h0M338.9 82.4h0"/><path stroke="#a070b8" stroke-opacity="0.3" stroke-width="3.3" stroke-linecap="round" fill="none" d="M280.4 138.1h0M619.7 408.1h0M593.5 71.4h0M602.4 347.0h0M14.3 190.4h0"/><path stroke="#a070b8" stroke-width="1.5" stroke-linecap="round" fill="none" d="M280.4 138.1h0M619.7 408.1h0M593.5 71.4h0M602.4 347.0h0M14.3 190.4h0"/><path stroke="#b878b8" stroke-opacity="0.3" stroke-width="3.7" stroke-linecap="round" fill="none" d="M101.7 73.6h0"/><path stroke="#b878b8" stroke-width="1.9" stroke-linecap="round" fill="none" d="M101.7 73.6h0"/><path stroke="#b878b8" stroke-opacity="0.3" stroke-width="3.3" stroke-linecap="round" fill="none" d="M671.5 275.1h0M725.9 59.0h0"/><path stroke="#b878b8" stroke-width="1.5" stroke-linecap="round" fill="none" d="M671.5 275.1h0M725.9 59.0h0"/><path stroke="#c898c8" stroke-opacity="0.3" stroke-width="3.3" stroke-linecap="round" fill="none" d="M463.9 102.4h0M458.5 291.0h0"/><path stroke="#c898c8" stroke-width="1.5" stroke-linecap="round" fill="none" d="M463.9 102.4h0M458.5 291.0h0"/><path stroke="#a070b8" stroke-opacity="0.3" stroke-width="3.7" stroke-linecap="round" fill="none" d="M370.4 32.5h0"/><path stroke="#a070b8" stroke-width="1.9" stroke-linecap="round" fill="none" d="M370.4 32.5h0"/><path stroke="#78b888" stroke-opacity="0.3" stroke-width="3.7" stroke-linecap="round" fill="none" d="M409.9 441.5h0M695.7 208.1h0"/><path stroke="#78b888" stroke-width="1.9" stroke-linecap="round" fill="none" d="M409.9 441.5h0M695.7 208.1h0"/><path stroke="#78b888" stroke-opacity="0.3" stroke-width="3.3" stroke-linecap="round" fill="none" d="M150.9 169.0h0M273.0 329.9h0M390.4 140.0h0"/><path stroke="#78b888" stroke-width="1.5" stroke-linecap="round" fill="none" d="M150.9 169.0h0M273.0 329.9h0M390.4 140.0h0"/><defs><filter id="bl2" x="-50%" y="-50%" width="200%" height="200%"><feGaussianBlur stdDeviation="1.1"/></filter></defs><g filter="url(#bl2)"><circle cx="475" cy="32" r="2.2" fill="#e8b070"/><circle cx="574" cy="281" r="2.6" fill="#e8d8b8"/><circle cx="365" cy="253" r="2.2" fill="#e8c890"/><circle cx="152" cy="390" r="2.2" fill="#f0e8e0"/><circle cx="543" cy="257" r="2.2" fill="#f0d090"/><circle cx="297" cy="82" r="1.8" fill="#e8e0e0"/><circle cx="461" cy="153" r="1.8" fill="#e0d8c8"/><circle cx="605" cy="200" r="1.8" fill="#d8d8d8"/><circle cx="707" cy="150" r="1.8" fill="#d0a060"/><circle cx="206" cy="179" r="1.6" fill="#d8c8c8"/><circle cx="258" cy="293" r="1.8" fill="#e0d0a0"/><circle cx="333" cy="301" r="1.6" fill="#e0e0d8"/><circle cx="449" cy="340" r="1.6" fill="#d8d0c0"/><circle cx="379" cy="372" r="1.6" fill="#e0d0e0"/><circle cx="516" cy="402" r="1.8" fill="#e8e0d0"/><circle cx="664" cy="364" r="1.6" fill="#e0d0b0"/><circle cx="35" cy="144" r="1.6" fill="#d8a060"/><circle cx="271" cy="147" r="1.5" fill="#d8c8c0"/><circle cx="36" cy="188" r="1.5" fill="#e0d0d8"/><circle cx="180" cy="178" r="1.5" fill="#e0b0e0"/><circle cx="142" cy="312" r="1.5" fill="#e0a0d8"/><circle cx="54" cy="294" r="1.5" fill="#e0c0e0"/><circle cx="235" cy="383" r="1.5" fill="#e0d0c0"/><circle cx="289" cy="375" r="1.3" fill="#d8d0c8"/><circle cx="379" cy="410" r="1.4" fill="#e0d8c0"/><circle cx="615" cy="48" r="1.5" fill="#e0c0d0"/><circle cx="377" cy="55" r="1.4" fill="#e0c0d0"/></g><path d="M409.85 76.05L246.65 254.35M491.5 165.2L328.25 343.45M573.15 254.35L409.85 432.55" stroke="#e6e6e6" stroke-width="1.2" fill="none"/><path d="M409.1 75.4L572.4 253.7M327.5 164.55L490.75 342.8M245.9 253.7L409.1 431.9" stroke="#c8b4b4" stroke-width="2" stroke-opacity="0.5" fill="none"/><path d="M408.6 74.9L245.4 253.2M490.25 164.05L327 342.3M571.9 253.2L408.6 431.4" stroke="#a00808" stroke-width="1.25" fill="none"/><path d="M409.1 75.4L572.4 253.7M327.5 164.55L490.75 342.8M245.9 253.7L409.1 431.9" stroke="#a41818" stroke-width="1.15" fill="none"/><text x="409" y="168.3" text-anchor="middle" font-family="Liberation Sans,sans-serif" font-size="11.5" fill="#8b0000">13262</text><text x="327.5" y="256.5" text-anchor="middle" font-family="Liberation Sans,sans-serif" font-size="11.5" fill="#8b0000">35676</text><text x="490" y="256.5" text-anchor="middle" font-family="Liberation Sans,sans-serif" font-size="11.5" fill="#8b0000">198</text><text x="408.5" y="344.8" text-anchor="middle" font-family="Liberation Sans,sans-serif" font-size="11.5" fill="#8b0000">864</text><g stroke="#58b058" stroke-width="1.1" fill="none"><circle cx="367.9" cy="229.60000000000002" r="7.6"/><path d="M357.9 229.60000000000002h7M370.9 229.60000000000002h7M367.9 219.60000000000002v7M367.9 232.60000000000002v7"/></g></svg></div>
<div style="position:absolute;left:5px;top:72px;width:736px;height:28px;background:#e2e5e9"></div>
<div style="position:absolute;left:110px;top:77px;width:1px;height:19px;background:#c3c9d0"></div>
<div style="position:absolute;left:281px;top:77px;width:1px;height:19px;background:#c3c9d0"></div>
<div style="position:absolute;left:5px;top:100px;width:266px;height:18px;background:#d1d5da;border-radius:0 0 5px 0"></div>
<div style="position:absolute;left:5px;top:117px;width:104px;height:26.700px;background:#d1d5da;border-radius:0 0 5px 0"></div>
<div style="position:absolute;left:8px;top:499px;width:731px;height:21px;background:#d9dcdf;border-radius:4px"></div>
<div style="position:absolute;left:45px;top:501px;width:55px;height:17px;background:#e3effb;border-radius:5px"></div>
<div style="position:absolute;left:629px;top:502px;width:26px;height:16px;background:#636b74;border-radius:8px"></div>
<div style="position:absolute;left:631.5px;top:504.5px;width:11px;height:11px;background:#fbfcfe;border-radius:6px"></div>
<div style="position:absolute;left:747px;top:72px;width:740px;height:1px;background:#cdd7e1"></div>
<div style="position:absolute;left:1213px;top:41px;width:82px;height:26px;border:1px solid #cdd7e1;"></div>
<div style="position:absolute;left:1268px;top:42px;width:28px;height:26px;background:#dde7ee"></div>
<div style="position:absolute;left:1240px;top:42px;width:1px;height:26px;background:#cdd7e1"></div>
<div style="position:absolute;left:1267px;top:42px;width:1px;height:26px;background:#cdd7e1"></div>
<svg width="742" height="450" viewBox="746 73 742 450" style="position:absolute;left:746px;top:73px"><g opacity="0.99"><path fill="#5f5f5f" d="M827 250.19h5.8v3.59h-5.8zM827 260.96h5.8v3.59h-5.8zM844.41 278.91h5.8v3.59h-5.8zM844.41 289.68h5.8v3.59h-5.8zM844.41 336.35h5.8v3.59h-5.8zM850.22 282.5h5.8v3.59h-5.8zM861.83 174.8h5.8v3.59h-5.8zM861.83 192.75h5.8v3.59h-5.8zM861.83 278.91h5.8v3.59h-5.8zM867.63 217.88h5.8v3.59h-5.8zM867.63 250.19h5.8v3.59h-5.8zM885.05 253.78h5.8v3.59h-5.8zM885.05 278.91h5.8v3.59h-5.8zM885.05 332.76h5.8v3.59h-5.8zM890.86 275.32h5.8v3.59h-5.8zM908.27 286.09h5.8v3.59h-5.8zM925.68 153.26h5.8v3.59h-5.8zM925.68 257.37h5.8v3.59h-5.8zM925.68 264.55h5.8v3.59h-5.8zM925.68 408.15h5.8v3.59h-5.8zM931.49 146.08h5.8v3.59h-5.8zM931.49 149.67h5.8v3.59h-5.8zM931.49 225.06h5.8v3.59h-5.8zM937.29 131.72h5.8v3.59h-5.8zM937.29 207.11h5.8v3.59h-5.8zM937.29 228.65h5.8v3.59h-5.8zM937.29 397.38h5.8v3.59h-5.8zM943.1 228.65h5.8v3.59h-5.8zM948.9 243.01h5.8v3.59h-5.8zM948.9 386.61h5.8v3.59h-5.8zM954.71 117.36h5.8v3.59h-5.8zM954.71 264.55h5.8v3.59h-5.8zM954.71 293.27h5.8v3.59h-5.8zM954.71 408.15h5.8v3.59h-5.8zM960.51 131.72h5.8v3.59h-5.8zM960.51 138.9h5.8v3.59h-5.8zM960.51 404.56h5.8v3.59h-5.8zM966.32 321.99h5.8v3.59h-5.8zM972.12 110.18h5.8v3.59h-5.8zM972.12 253.78h5.8v3.59h-5.8zM972.12 383.02h5.8v3.59h-5.8zM977.93 113.77h5.8v3.59h-5.8zM977.93 314.81h5.8v3.59h-5.8zM983.74 318.4h5.8v3.59h-5.8zM995.35 375.84h5.8v3.59h-5.8zM995.35 386.61h5.8v3.59h-5.8zM1001.15 318.4h5.8v3.59h-5.8zM1001.15 429.69h5.8v3.59h-5.8zM1006.95 174.8h5.8v3.59h-5.8zM1006.95 221.47h5.8v3.59h-5.8zM1006.95 228.65h5.8v3.59h-5.8zM1006.95 325.58h5.8v3.59h-5.8zM1006.95 411.74h5.8v3.59h-5.8zM1012.76 408.15h5.8v3.59h-5.8zM1018.57 293.27h5.8v3.59h-5.8zM1018.57 397.38h5.8v3.59h-5.8zM1030.17 207.11h5.8v3.59h-5.8zM1030.17 275.32h5.8v3.59h-5.8zM1030.17 300.45h5.8v3.59h-5.8zM1030.17 436.87h5.8v3.59h-5.8zM1035.98 135.31h5.8v3.59h-5.8zM1047.59 350.71h5.8v3.59h-5.8zM1053.39 174.8h5.8v3.59h-5.8zM1059.2 106.59h5.8v3.59h-5.8zM1059.2 189.16h5.8v3.59h-5.8zM1059.2 196.34h5.8v3.59h-5.8zM1059.2 325.58h5.8v3.59h-5.8zM1059.2 444.05h5.8v3.59h-5.8zM1065.01 103h5.8v3.59h-5.8zM1065.01 228.65h5.8v3.59h-5.8zM1065.01 278.91h5.8v3.59h-5.8zM1070.81 207.11h5.8v3.59h-5.8zM1070.81 257.37h5.8v3.59h-5.8zM1076.62 131.72h5.8v3.59h-5.8zM1082.42 264.55h5.8v3.59h-5.8zM1088.22 174.8h5.8v3.59h-5.8zM1099.84 275.32h5.8v3.59h-5.8zM1099.84 390.2h5.8v3.59h-5.8zM1099.84 451.23h5.8v3.59h-5.8zM1105.64 458.41h5.8v3.59h-5.8zM1111.44 250.19h5.8v3.59h-5.8zM1111.44 372.25h5.8v3.59h-5.8zM1111.44 418.92h5.8v3.59h-5.8zM1117.25 120.95h5.8v3.59h-5.8zM1117.25 181.98h5.8v3.59h-5.8zM1117.25 235.83h5.8v3.59h-5.8zM1117.25 275.32h5.8v3.59h-5.8zM1117.25 347.12h5.8v3.59h-5.8zM1123.06 106.59h5.8v3.59h-5.8zM1123.06 167.62h5.8v3.59h-5.8zM1123.06 185.57h5.8v3.59h-5.8zM1123.06 278.91h5.8v3.59h-5.8zM1123.06 282.5h5.8v3.59h-5.8zM1123.06 300.45h5.8v3.59h-5.8zM1123.06 390.2h5.8v3.59h-5.8zM1128.86 106.59h5.8v3.59h-5.8zM1134.66 117.36h5.8v3.59h-5.8zM1134.66 278.91h5.8v3.59h-5.8zM1134.66 429.69h5.8v3.59h-5.8zM1134.66 444.05h5.8v3.59h-5.8zM1134.66 451.23h5.8v3.59h-5.8zM1140.47 400.97h5.8v3.59h-5.8zM1146.28 181.98h5.8v3.59h-5.8zM1146.28 225.06h5.8v3.59h-5.8zM1152.08 110.18h5.8v3.59h-5.8zM1157.88 178.39h5.8v3.59h-5.8zM1157.88 354.3h5.8v3.59h-5.8zM1157.88 444.05h5.8v3.59h-5.8zM1163.69 106.59h5.8v3.59h-5.8zM1163.69 207.11h5.8v3.59h-5.8zM1163.69 304.04h5.8v3.59h-5.8zM1163.69 440.46h5.8v3.59h-5.8zM1169.49 372.25h5.8v3.59h-5.8zM1175.3 192.75h5.8v3.59h-5.8zM1175.3 228.65h5.8v3.59h-5.8zM1175.3 278.91h5.8v3.59h-5.8zM1175.3 293.27h5.8v3.59h-5.8zM1175.3 300.45h5.8v3.59h-5.8zM1175.3 314.81h5.8v3.59h-5.8zM1181.11 113.77h5.8v3.59h-5.8zM1181.11 164.03h5.8v3.59h-5.8zM1181.11 296.86h5.8v3.59h-5.8zM1181.11 408.15h5.8v3.59h-5.8zM1186.91 311.22h5.8v3.59h-5.8zM1186.91 318.4h5.8v3.59h-5.8zM1186.91 440.46h5.8v3.59h-5.8zM1192.71 167.62h5.8v3.59h-5.8zM1192.71 178.39h5.8v3.59h-5.8zM1192.71 189.16h5.8v3.59h-5.8zM1192.71 217.88h5.8v3.59h-5.8zM1198.52 174.8h5.8v3.59h-5.8zM1198.52 235.83h5.8v3.59h-5.8zM1198.52 253.78h5.8v3.59h-5.8zM1198.52 278.91h5.8v3.59h-5.8zM1198.52 426.1h5.8v3.59h-5.8zM1204.33 106.59h5.8v3.59h-5.8zM1204.33 153.26h5.8v3.59h-5.8zM1204.33 235.83h5.8v3.59h-5.8zM1204.33 250.19h5.8v3.59h-5.8zM1204.33 354.3h5.8v3.59h-5.8zM1204.33 383.02h5.8v3.59h-5.8zM1210.13 253.78h5.8v3.59h-5.8zM1210.13 447.64h5.8v3.59h-5.8zM1215.93 196.34h5.8v3.59h-5.8zM1227.55 318.4h5.8v3.59h-5.8zM1233.35 400.97h5.8v3.59h-5.8zM1244.96 185.57h5.8v3.59h-5.8zM1244.96 293.27h5.8v3.59h-5.8zM1244.96 314.81h5.8v3.59h-5.8zM1244.96 357.89h5.8v3.59h-5.8zM1244.96 400.97h5.8v3.59h-5.8zM1250.76 415.33h5.8v3.59h-5.8zM1256.57 390.2h5.8v3.59h-5.8zM1262.38 332.76h5.8v3.59h-5.8zM1262.38 343.53h5.8v3.59h-5.8zM1262.38 397.38h5.8v3.59h-5.8zM1273.98 354.3h5.8v3.59h-5.8zM1279.79 160.44h5.8v3.59h-5.8zM1279.79 386.61h5.8v3.59h-5.8zM1285.6 339.94h5.8v3.59h-5.8zM1291.4 185.57h5.8v3.59h-5.8zM1291.4 361.48h5.8v3.59h-5.8zM1308.82 296.86h5.8v3.59h-5.8zM1314.62 210.7h5.8v3.59h-5.8zM1314.62 296.86h5.8v3.59h-5.8zM1320.42 192.75h5.8v3.59h-5.8zM1326.23 131.72h5.8v3.59h-5.8zM1326.23 383.02h5.8v3.59h-5.8zM1332.03 386.61h5.8v3.59h-5.8zM1337.84 138.9h5.8v3.59h-5.8zM1337.84 257.37h5.8v3.59h-5.8zM1343.64 300.45h5.8v3.59h-5.8zM1366.87 318.4h5.8v3.59h-5.8zM1378.47 214.29h5.8v3.59h-5.8zM1384.28 214.29h5.8v3.59h-5.8zM1384.28 343.53h5.8v3.59h-5.8zM1390.09 293.27h5.8v3.59h-5.8zM1395.89 314.81h5.8v3.59h-5.8zM1401.69 232.24h5.8v3.59h-5.8z"/><path fill="#949494" d="M827 289.68h5.8v3.59h-5.8zM856.02 232.24h5.8v3.59h-5.8zM896.66 271.73h5.8v3.59h-5.8zM914.08 304.04h5.8v3.59h-5.8zM931.49 304.04h5.8v3.59h-5.8zM937.29 128.13h5.8v3.59h-5.8zM943.1 275.32h5.8v3.59h-5.8zM948.9 379.43h5.8v3.59h-5.8zM960.51 318.4h5.8v3.59h-5.8zM983.74 304.04h5.8v3.59h-5.8zM989.54 207.11h5.8v3.59h-5.8zM1012.76 286.09h5.8v3.59h-5.8zM1024.37 192.75h5.8v3.59h-5.8zM1047.59 325.58h5.8v3.59h-5.8zM1053.39 221.47h5.8v3.59h-5.8zM1053.39 304.04h5.8v3.59h-5.8zM1065.01 210.7h5.8v3.59h-5.8zM1070.81 293.27h5.8v3.59h-5.8zM1094.03 164.03h5.8v3.59h-5.8zM1105.64 103h5.8v3.59h-5.8zM1111.44 156.85h5.8v3.59h-5.8zM1111.44 171.21h5.8v3.59h-5.8zM1146.28 160.44h5.8v3.59h-5.8zM1152.08 451.23h5.8v3.59h-5.8zM1169.49 138.9h5.8v3.59h-5.8zM1169.49 171.21h5.8v3.59h-5.8zM1169.49 458.41h5.8v3.59h-5.8zM1186.91 124.54h5.8v3.59h-5.8zM1186.91 257.37h5.8v3.59h-5.8zM1186.91 260.96h5.8v3.59h-5.8zM1239.15 368.66h5.8v3.59h-5.8zM1239.15 390.2h5.8v3.59h-5.8zM1250.76 164.03h5.8v3.59h-5.8zM1268.18 404.56h5.8v3.59h-5.8zM1285.6 347.12h5.8v3.59h-5.8zM1291.4 113.77h5.8v3.59h-5.8zM1291.4 117.36h5.8v3.59h-5.8zM1297.2 383.02h5.8v3.59h-5.8zM1337.84 160.44h5.8v3.59h-5.8zM1343.64 339.94h5.8v3.59h-5.8zM1355.26 372.25h5.8v3.59h-5.8zM1372.67 207.11h5.8v3.59h-5.8zM1390.09 271.73h5.8v3.59h-5.8z"/><path fill="#7b7b7b" d="M827 293.27h5.8v3.59h-5.8zM827 296.86h5.8v3.59h-5.8zM867.63 347.12h5.8v3.59h-5.8zM902.47 393.79h5.8v3.59h-5.8zM908.27 393.79h5.8v3.59h-5.8zM919.88 174.8h5.8v3.59h-5.8zM937.29 408.15h5.8v3.59h-5.8zM983.74 225.06h5.8v3.59h-5.8zM983.74 365.07h5.8v3.59h-5.8zM989.54 372.25h5.8v3.59h-5.8zM1024.37 260.96h5.8v3.59h-5.8zM1024.37 375.84h5.8v3.59h-5.8zM1041.79 185.57h5.8v3.59h-5.8zM1053.39 314.81h5.8v3.59h-5.8zM1053.39 339.94h5.8v3.59h-5.8zM1088.22 278.91h5.8v3.59h-5.8zM1088.22 436.87h5.8v3.59h-5.8zM1134.66 347.12h5.8v3.59h-5.8zM1152.08 383.02h5.8v3.59h-5.8zM1192.71 135.31h5.8v3.59h-5.8zM1210.13 189.16h5.8v3.59h-5.8zM1215.93 239.42h5.8v3.59h-5.8zM1221.74 167.62h5.8v3.59h-5.8zM1221.74 375.84h5.8v3.59h-5.8zM1233.35 171.21h5.8v3.59h-5.8zM1233.35 253.78h5.8v3.59h-5.8zM1233.35 422.51h5.8v3.59h-5.8zM1239.15 235.83h5.8v3.59h-5.8zM1250.76 138.9h5.8v3.59h-5.8zM1256.57 429.69h5.8v3.59h-5.8zM1279.79 354.3h5.8v3.59h-5.8zM1285.6 120.95h5.8v3.59h-5.8zM1308.82 207.11h5.8v3.59h-5.8zM1332.03 142.49h5.8v3.59h-5.8zM1343.64 365.07h5.8v3.59h-5.8zM1355.26 332.76h5.8v3.59h-5.8zM1361.06 199.93h5.8v3.59h-5.8z"/><path fill="#f1f1f1" d="M838.61 210.7h5.8v3.59h-5.8zM856.02 339.94h5.8v3.59h-5.8zM856.02 357.89h5.8v3.59h-5.8zM861.83 357.89h5.8v3.59h-5.8zM873.44 174.8h5.8v3.59h-5.8zM873.44 181.98h5.8v3.59h-5.8zM879.25 307.63h5.8v3.59h-5.8zM885.05 300.45h5.8v3.59h-5.8zM890.86 138.9h5.8v3.59h-5.8zM890.86 304.04h5.8v3.59h-5.8zM890.86 350.71h5.8v3.59h-5.8zM902.47 138.9h5.8v3.59h-5.8zM902.47 164.03h5.8v3.59h-5.8zM902.47 171.21h5.8v3.59h-5.8zM902.47 329.17h5.8v3.59h-5.8zM902.47 343.53h5.8v3.59h-5.8zM902.47 400.97h5.8v3.59h-5.8zM908.27 131.72h5.8v3.59h-5.8zM908.27 138.9h5.8v3.59h-5.8zM908.27 375.84h5.8v3.59h-5.8zM914.08 135.31h5.8v3.59h-5.8zM919.88 135.31h5.8v3.59h-5.8zM925.68 171.21h5.8v3.59h-5.8zM931.49 171.21h5.8v3.59h-5.8zM937.29 325.58h5.8v3.59h-5.8zM943.1 160.44h5.8v3.59h-5.8zM960.51 135.31h5.8v3.59h-5.8zM960.51 235.83h5.8v3.59h-5.8zM995.35 189.16h5.8v3.59h-5.8zM1006.95 350.71h5.8v3.59h-5.8zM1012.76 196.34h5.8v3.59h-5.8zM1012.76 282.5h5.8v3.59h-5.8zM1012.76 304.04h5.8v3.59h-5.8zM1018.57 178.39h5.8v3.59h-5.8zM1024.37 451.23h5.8v3.59h-5.8zM1035.98 160.44h5.8v3.59h-5.8zM1047.59 383.02h5.8v3.59h-5.8zM1053.39 189.16h5.8v3.59h-5.8zM1065.01 160.44h5.8v3.59h-5.8zM1070.81 426.1h5.8v3.59h-5.8zM1076.62 149.67h5.8v3.59h-5.8zM1082.42 149.67h5.8v3.59h-5.8zM1088.22 164.03h5.8v3.59h-5.8zM1099.84 210.7h5.8v3.59h-5.8zM1099.84 304.04h5.8v3.59h-5.8zM1099.84 418.92h5.8v3.59h-5.8zM1117.25 196.34h5.8v3.59h-5.8zM1128.86 271.73h5.8v3.59h-5.8zM1128.86 329.17h5.8v3.59h-5.8zM1157.88 314.81h5.8v3.59h-5.8zM1181.11 138.9h5.8v3.59h-5.8zM1181.11 142.49h5.8v3.59h-5.8zM1204.33 192.75h5.8v3.59h-5.8zM1204.33 196.34h5.8v3.59h-5.8zM1204.33 199.93h5.8v3.59h-5.8zM1221.74 164.03h5.8v3.59h-5.8zM1227.55 375.84h5.8v3.59h-5.8zM1273.98 146.08h5.8v3.59h-5.8zM1285.6 185.57h5.8v3.59h-5.8zM1285.6 189.16h5.8v3.59h-5.8zM1291.4 181.98h5.8v3.59h-5.8zM1303.01 278.91h5.8v3.59h-5.8zM1314.62 167.62h5.8v3.59h-5.8zM1332.03 185.57h5.8v3.59h-5.8zM1332.03 239.42h5.8v3.59h-5.8zM1366.87 207.11h5.8v3.59h-5.8zM1366.87 210.7h5.8v3.59h-5.8zM1372.67 203.52h5.8v3.59h-5.8zM1372.67 214.29h5.8v3.59h-5.8zM1372.67 225.06h5.8v3.59h-5.8zM1378.47 203.52h5.8v3.59h-5.8zM1378.47 207.11h5.8v3.59h-5.8zM1378.47 210.7h5.8v3.59h-5.8zM1378.47 286.09h5.8v3.59h-5.8zM1384.28 210.7h5.8v3.59h-5.8zM1384.28 221.47h5.8v3.59h-5.8zM1384.28 225.06h5.8v3.59h-5.8zM1395.89 207.11h5.8v3.59h-5.8z"/><path fill="#f6f6f6" d="M838.61 246.6h5.8v3.59h-5.8zM850.22 210.7h5.8v3.59h-5.8zM850.22 321.99h5.8v3.59h-5.8zM850.22 354.3h5.8v3.59h-5.8zM856.02 329.17h5.8v3.59h-5.8zM867.63 343.53h5.8v3.59h-5.8zM873.44 304.04h5.8v3.59h-5.8zM902.47 361.48h5.8v3.59h-5.8zM902.47 372.25h5.8v3.59h-5.8zM908.27 329.17h5.8v3.59h-5.8zM908.27 350.71h5.8v3.59h-5.8zM914.08 311.22h5.8v3.59h-5.8zM914.08 336.35h5.8v3.59h-5.8zM919.88 325.58h5.8v3.59h-5.8zM919.88 343.53h5.8v3.59h-5.8zM919.88 350.71h5.8v3.59h-5.8zM925.68 311.22h5.8v3.59h-5.8zM931.49 271.73h5.8v3.59h-5.8zM931.49 318.4h5.8v3.59h-5.8zM931.49 332.76h5.8v3.59h-5.8zM931.49 336.35h5.8v3.59h-5.8zM937.29 336.35h5.8v3.59h-5.8zM937.29 354.3h5.8v3.59h-5.8zM943.1 347.12h5.8v3.59h-5.8zM948.9 357.89h5.8v3.59h-5.8zM948.9 368.66h5.8v3.59h-5.8zM954.71 160.44h5.8v3.59h-5.8zM983.74 178.39h5.8v3.59h-5.8zM1001.15 321.99h5.8v3.59h-5.8zM1018.57 131.72h5.8v3.59h-5.8zM1018.57 454.82h5.8v3.59h-5.8zM1047.59 379.43h5.8v3.59h-5.8zM1047.59 386.61h5.8v3.59h-5.8zM1111.44 174.8h5.8v3.59h-5.8zM1111.44 260.96h5.8v3.59h-5.8zM1111.44 314.81h5.8v3.59h-5.8zM1140.47 365.07h5.8v3.59h-5.8zM1186.91 225.06h5.8v3.59h-5.8zM1186.91 264.55h5.8v3.59h-5.8zM1186.91 451.23h5.8v3.59h-5.8zM1204.33 239.42h5.8v3.59h-5.8zM1204.33 257.37h5.8v3.59h-5.8zM1210.13 311.22h5.8v3.59h-5.8zM1233.35 217.88h5.8v3.59h-5.8zM1233.35 418.92h5.8v3.59h-5.8zM1308.82 343.53h5.8v3.59h-5.8zM1349.45 192.75h5.8v3.59h-5.8z"/><path fill="#e3e3e3" d="M838.61 314.81h5.8v3.59h-5.8zM861.83 321.99h5.8v3.59h-5.8zM879.25 339.94h5.8v3.59h-5.8zM890.86 343.53h5.8v3.59h-5.8zM896.66 325.58h5.8v3.59h-5.8zM902.47 318.4h5.8v3.59h-5.8zM902.47 339.94h5.8v3.59h-5.8zM902.47 379.43h5.8v3.59h-5.8zM908.27 124.54h5.8v3.59h-5.8zM908.27 339.94h5.8v3.59h-5.8zM908.27 368.66h5.8v3.59h-5.8zM908.27 400.97h5.8v3.59h-5.8zM914.08 225.06h5.8v3.59h-5.8zM919.88 311.22h5.8v3.59h-5.8zM919.88 329.17h5.8v3.59h-5.8zM919.88 372.25h5.8v3.59h-5.8zM925.68 329.17h5.8v3.59h-5.8zM925.68 336.35h5.8v3.59h-5.8zM925.68 347.12h5.8v3.59h-5.8zM931.49 372.25h5.8v3.59h-5.8zM937.29 332.76h5.8v3.59h-5.8zM937.29 368.66h5.8v3.59h-5.8zM937.29 372.25h5.8v3.59h-5.8zM937.29 379.43h5.8v3.59h-5.8zM943.1 372.25h5.8v3.59h-5.8zM948.9 296.86h5.8v3.59h-5.8zM948.9 314.81h5.8v3.59h-5.8zM954.71 372.25h5.8v3.59h-5.8zM960.51 383.02h5.8v3.59h-5.8zM966.32 131.72h5.8v3.59h-5.8zM966.32 354.3h5.8v3.59h-5.8zM966.32 386.61h5.8v3.59h-5.8zM972.12 156.85h5.8v3.59h-5.8zM977.93 357.89h5.8v3.59h-5.8zM983.74 192.75h5.8v3.59h-5.8zM995.35 253.78h5.8v3.59h-5.8zM995.35 321.99h5.8v3.59h-5.8zM1012.76 232.24h5.8v3.59h-5.8zM1024.37 300.45h5.8v3.59h-5.8zM1030.17 375.84h5.8v3.59h-5.8zM1041.79 160.44h5.8v3.59h-5.8zM1041.79 181.98h5.8v3.59h-5.8zM1070.81 379.43h5.8v3.59h-5.8zM1070.81 386.61h5.8v3.59h-5.8zM1082.42 160.44h5.8v3.59h-5.8zM1088.22 246.6h5.8v3.59h-5.8zM1088.22 282.5h5.8v3.59h-5.8zM1088.22 426.1h5.8v3.59h-5.8zM1099.84 253.78h5.8v3.59h-5.8zM1105.64 250.19h5.8v3.59h-5.8zM1117.25 167.62h5.8v3.59h-5.8zM1117.25 239.42h5.8v3.59h-5.8zM1134.66 243.01h5.8v3.59h-5.8zM1146.28 232.24h5.8v3.59h-5.8zM1146.28 383.02h5.8v3.59h-5.8zM1146.28 458.41h5.8v3.59h-5.8zM1169.49 289.68h5.8v3.59h-5.8zM1175.3 128.13h5.8v3.59h-5.8zM1181.11 106.59h5.8v3.59h-5.8zM1181.11 120.95h5.8v3.59h-5.8zM1181.11 311.22h5.8v3.59h-5.8zM1181.11 314.81h5.8v3.59h-5.8zM1181.11 318.4h5.8v3.59h-5.8zM1186.91 350.71h5.8v3.59h-5.8zM1210.13 199.93h5.8v3.59h-5.8zM1215.93 436.87h5.8v3.59h-5.8zM1227.55 171.21h5.8v3.59h-5.8zM1239.15 232.24h5.8v3.59h-5.8zM1244.96 397.38h5.8v3.59h-5.8zM1250.76 135.31h5.8v3.59h-5.8zM1256.57 149.67h5.8v3.59h-5.8zM1256.57 164.03h5.8v3.59h-5.8zM1256.57 325.58h5.8v3.59h-5.8zM1273.98 142.49h5.8v3.59h-5.8zM1273.98 160.44h5.8v3.59h-5.8zM1273.98 336.35h5.8v3.59h-5.8zM1285.6 103h5.8v3.59h-5.8zM1285.6 246.6h5.8v3.59h-5.8zM1291.4 393.79h5.8v3.59h-5.8zM1303.01 207.11h5.8v3.59h-5.8zM1308.82 131.72h5.8v3.59h-5.8zM1308.82 135.31h5.8v3.59h-5.8zM1320.42 214.29h5.8v3.59h-5.8zM1349.45 225.06h5.8v3.59h-5.8zM1349.45 329.17h5.8v3.59h-5.8zM1349.45 336.35h5.8v3.59h-5.8zM1349.45 375.84h5.8v3.59h-5.8zM1355.26 329.17h5.8v3.59h-5.8zM1372.67 210.7h5.8v3.59h-5.8zM1384.28 207.11h5.8v3.59h-5.8zM1390.09 214.29h5.8v3.59h-5.8zM1395.89 221.47h5.8v3.59h-5.8z"/><path fill="#b4b4b4" d="M838.61 318.4h5.8v3.59h-5.8zM844.41 210.7h5.8v3.59h-5.8zM844.41 214.29h5.8v3.59h-5.8zM861.83 318.4h5.8v3.59h-5.8zM867.63 318.4h5.8v3.59h-5.8zM873.44 250.19h5.8v3.59h-5.8zM885.05 343.53h5.8v3.59h-5.8zM914.08 372.25h5.8v3.59h-5.8zM931.49 128.13h5.8v3.59h-5.8zM931.49 347.12h5.8v3.59h-5.8zM943.1 379.43h5.8v3.59h-5.8zM966.32 135.31h5.8v3.59h-5.8zM966.32 343.53h5.8v3.59h-5.8zM972.12 357.89h5.8v3.59h-5.8zM983.74 300.45h5.8v3.59h-5.8zM995.35 207.11h5.8v3.59h-5.8zM1012.76 253.78h5.8v3.59h-5.8zM1012.76 368.66h5.8v3.59h-5.8zM1035.98 368.66h5.8v3.59h-5.8zM1041.79 350.71h5.8v3.59h-5.8zM1059.2 307.63h5.8v3.59h-5.8zM1065.01 426.1h5.8v3.59h-5.8zM1065.01 454.82h5.8v3.59h-5.8zM1070.81 174.8h5.8v3.59h-5.8zM1070.81 383.02h5.8v3.59h-5.8zM1082.42 164.03h5.8v3.59h-5.8zM1082.42 404.56h5.8v3.59h-5.8zM1094.03 217.88h5.8v3.59h-5.8zM1094.03 368.66h5.8v3.59h-5.8zM1099.84 339.94h5.8v3.59h-5.8zM1099.84 343.53h5.8v3.59h-5.8zM1105.64 210.7h5.8v3.59h-5.8zM1105.64 404.56h5.8v3.59h-5.8zM1152.08 250.19h5.8v3.59h-5.8zM1152.08 375.84h5.8v3.59h-5.8zM1192.71 260.96h5.8v3.59h-5.8zM1198.52 361.48h5.8v3.59h-5.8zM1198.52 422.51h5.8v3.59h-5.8zM1210.13 192.75h5.8v3.59h-5.8zM1210.13 429.69h5.8v3.59h-5.8zM1215.93 264.55h5.8v3.59h-5.8zM1221.74 304.04h5.8v3.59h-5.8zM1256.57 321.99h5.8v3.59h-5.8zM1262.38 383.02h5.8v3.59h-5.8zM1291.4 264.55h5.8v3.59h-5.8zM1303.01 128.13h5.8v3.59h-5.8zM1303.01 131.72h5.8v3.59h-5.8zM1314.62 171.21h5.8v3.59h-5.8zM1314.62 243.01h5.8v3.59h-5.8zM1349.45 332.76h5.8v3.59h-5.8zM1355.26 336.35h5.8v3.59h-5.8zM1361.06 307.63h5.8v3.59h-5.8zM1361.06 311.22h5.8v3.59h-5.8zM1366.87 221.47h5.8v3.59h-5.8zM1390.09 210.7h5.8v3.59h-5.8zM1390.09 221.47h5.8v3.59h-5.8zM1390.09 225.06h5.8v3.59h-5.8zM1395.89 210.7h5.8v3.59h-5.8z"/><path fill="#f0f0f0" d="M844.41 321.99h5.8v3.59h-5.8zM856.02 325.58h5.8v3.59h-5.8zM867.63 307.63h5.8v3.59h-5.8zM867.63 321.99h5.8v3.59h-5.8zM867.63 354.3h5.8v3.59h-5.8zM873.44 357.89h5.8v3.59h-5.8zM879.25 210.7h5.8v3.59h-5.8zM879.25 311.22h5.8v3.59h-5.8zM885.05 372.25h5.8v3.59h-5.8zM890.86 314.81h5.8v3.59h-5.8zM890.86 347.12h5.8v3.59h-5.8zM890.86 357.89h5.8v3.59h-5.8zM890.86 375.84h5.8v3.59h-5.8zM890.86 383.02h5.8v3.59h-5.8zM896.66 318.4h5.8v3.59h-5.8zM896.66 343.53h5.8v3.59h-5.8zM902.47 160.44h5.8v3.59h-5.8zM902.47 321.99h5.8v3.59h-5.8zM914.08 339.94h5.8v3.59h-5.8zM914.08 343.53h5.8v3.59h-5.8zM914.08 347.12h5.8v3.59h-5.8zM914.08 368.66h5.8v3.59h-5.8zM919.88 307.63h5.8v3.59h-5.8zM919.88 339.94h5.8v3.59h-5.8zM925.68 350.71h5.8v3.59h-5.8zM931.49 314.81h5.8v3.59h-5.8zM931.49 325.58h5.8v3.59h-5.8zM931.49 339.94h5.8v3.59h-5.8zM931.49 354.3h5.8v3.59h-5.8zM937.29 347.12h5.8v3.59h-5.8zM943.1 354.3h5.8v3.59h-5.8zM948.9 336.35h5.8v3.59h-5.8zM954.71 314.81h5.8v3.59h-5.8zM966.32 181.98h5.8v3.59h-5.8zM972.12 268.14h5.8v3.59h-5.8zM983.74 354.3h5.8v3.59h-5.8zM1001.15 271.73h5.8v3.59h-5.8zM1006.95 286.09h5.8v3.59h-5.8zM1024.37 146.08h5.8v3.59h-5.8zM1030.17 185.57h5.8v3.59h-5.8zM1041.79 321.99h5.8v3.59h-5.8zM1041.79 329.17h5.8v3.59h-5.8zM1047.59 103h5.8v3.59h-5.8zM1065.01 390.2h5.8v3.59h-5.8zM1082.42 181.98h5.8v3.59h-5.8zM1082.42 228.65h5.8v3.59h-5.8zM1099.84 160.44h5.8v3.59h-5.8zM1105.64 347.12h5.8v3.59h-5.8zM1117.25 103h5.8v3.59h-5.8zM1123.06 110.18h5.8v3.59h-5.8zM1134.66 454.82h5.8v3.59h-5.8zM1140.47 300.45h5.8v3.59h-5.8zM1157.88 451.23h5.8v3.59h-5.8zM1198.52 318.4h5.8v3.59h-5.8zM1210.13 138.9h5.8v3.59h-5.8zM1239.15 210.7h5.8v3.59h-5.8zM1256.57 232.24h5.8v3.59h-5.8zM1279.79 368.66h5.8v3.59h-5.8zM1355.26 368.66h5.8v3.59h-5.8zM1372.67 239.42h5.8v3.59h-5.8zM1378.47 329.17h5.8v3.59h-5.8zM1384.28 250.19h5.8v3.59h-5.8zM1390.09 250.19h5.8v3.59h-5.8z"/><path fill="#f5f5f5" d="M850.22 318.4h5.8v3.59h-5.8zM867.63 329.17h5.8v3.59h-5.8zM873.44 347.12h5.8v3.59h-5.8zM885.05 365.07h5.8v3.59h-5.8zM890.86 339.94h5.8v3.59h-5.8zM896.66 350.71h5.8v3.59h-5.8zM902.47 311.22h5.8v3.59h-5.8zM902.47 354.3h5.8v3.59h-5.8zM908.27 311.22h5.8v3.59h-5.8zM908.27 321.99h5.8v3.59h-5.8zM908.27 347.12h5.8v3.59h-5.8zM908.27 386.61h5.8v3.59h-5.8zM914.08 203.52h5.8v3.59h-5.8zM914.08 314.81h5.8v3.59h-5.8zM914.08 325.58h5.8v3.59h-5.8zM914.08 393.79h5.8v3.59h-5.8zM919.88 321.99h5.8v3.59h-5.8zM919.88 365.07h5.8v3.59h-5.8zM925.68 210.7h5.8v3.59h-5.8zM925.68 318.4h5.8v3.59h-5.8zM925.68 343.53h5.8v3.59h-5.8zM925.68 365.07h5.8v3.59h-5.8zM931.49 350.71h5.8v3.59h-5.8zM937.29 235.83h5.8v3.59h-5.8zM937.29 361.48h5.8v3.59h-5.8zM943.1 321.99h5.8v3.59h-5.8zM948.9 343.53h5.8v3.59h-5.8zM948.9 347.12h5.8v3.59h-5.8zM954.71 321.99h5.8v3.59h-5.8zM960.51 289.68h5.8v3.59h-5.8zM960.51 325.58h5.8v3.59h-5.8zM960.51 375.84h5.8v3.59h-5.8zM966.32 314.81h5.8v3.59h-5.8zM995.35 225.06h5.8v3.59h-5.8zM1030.17 128.13h5.8v3.59h-5.8zM1030.17 321.99h5.8v3.59h-5.8zM1041.79 314.81h5.8v3.59h-5.8zM1059.2 185.57h5.8v3.59h-5.8zM1094.03 275.32h5.8v3.59h-5.8zM1105.64 239.42h5.8v3.59h-5.8zM1105.64 257.37h5.8v3.59h-5.8zM1128.86 164.03h5.8v3.59h-5.8zM1134.66 268.14h5.8v3.59h-5.8zM1157.88 368.66h5.8v3.59h-5.8zM1175.3 171.21h5.8v3.59h-5.8zM1210.13 221.47h5.8v3.59h-5.8zM1210.13 397.38h5.8v3.59h-5.8zM1221.74 318.4h5.8v3.59h-5.8zM1233.35 311.22h5.8v3.59h-5.8zM1250.76 203.52h5.8v3.59h-5.8zM1262.38 404.56h5.8v3.59h-5.8zM1285.6 217.88h5.8v3.59h-5.8zM1303.01 415.33h5.8v3.59h-5.8zM1332.03 203.52h5.8v3.59h-5.8z"/><path fill="#cdcdcd" d="M873.44 325.58h5.8v3.59h-5.8zM879.25 343.53h5.8v3.59h-5.8zM890.86 239.42h5.8v3.59h-5.8zM896.66 311.22h5.8v3.59h-5.8zM908.27 336.35h5.8v3.59h-5.8zM925.68 321.99h5.8v3.59h-5.8zM948.9 275.32h5.8v3.59h-5.8zM972.12 354.3h5.8v3.59h-5.8zM989.54 189.16h5.8v3.59h-5.8zM989.54 339.94h5.8v3.59h-5.8zM1018.57 217.88h5.8v3.59h-5.8zM1047.59 271.73h5.8v3.59h-5.8zM1053.39 271.73h5.8v3.59h-5.8zM1082.42 372.25h5.8v3.59h-5.8zM1094.03 404.56h5.8v3.59h-5.8zM1117.25 171.21h5.8v3.59h-5.8zM1123.06 196.34h5.8v3.59h-5.8zM1123.06 361.48h5.8v3.59h-5.8zM1128.86 354.3h5.8v3.59h-5.8zM1204.33 321.99h5.8v3.59h-5.8zM1210.13 325.58h5.8v3.59h-5.8zM1215.93 221.47h5.8v3.59h-5.8zM1250.76 393.79h5.8v3.59h-5.8zM1250.76 397.38h5.8v3.59h-5.8zM1250.76 400.97h5.8v3.59h-5.8zM1256.57 383.02h5.8v3.59h-5.8zM1297.2 264.55h5.8v3.59h-5.8zM1349.45 372.25h5.8v3.59h-5.8zM1361.06 171.21h5.8v3.59h-5.8zM1361.06 339.94h5.8v3.59h-5.8zM1372.67 221.47h5.8v3.59h-5.8zM1378.47 221.47h5.8v3.59h-5.8z"/><path fill="#f3f3f3" d="M873.44 354.3h5.8v3.59h-5.8zM890.86 321.99h5.8v3.59h-5.8zM890.86 354.3h5.8v3.59h-5.8zM896.66 365.07h5.8v3.59h-5.8zM902.47 336.35h5.8v3.59h-5.8zM908.27 235.83h5.8v3.59h-5.8zM908.27 307.63h5.8v3.59h-5.8zM908.27 332.76h5.8v3.59h-5.8zM914.08 318.4h5.8v3.59h-5.8zM914.08 332.76h5.8v3.59h-5.8zM914.08 354.3h5.8v3.59h-5.8zM925.68 339.94h5.8v3.59h-5.8zM925.68 354.3h5.8v3.59h-5.8zM931.49 390.2h5.8v3.59h-5.8zM943.1 368.66h5.8v3.59h-5.8zM948.9 135.31h5.8v3.59h-5.8zM954.71 325.58h5.8v3.59h-5.8zM960.51 350.71h5.8v3.59h-5.8zM972.12 174.8h5.8v3.59h-5.8zM1012.76 311.22h5.8v3.59h-5.8zM1024.37 343.53h5.8v3.59h-5.8zM1030.17 174.8h5.8v3.59h-5.8zM1041.79 167.62h5.8v3.59h-5.8zM1041.79 426.1h5.8v3.59h-5.8zM1053.39 128.13h5.8v3.59h-5.8zM1053.39 181.98h5.8v3.59h-5.8zM1059.2 192.75h5.8v3.59h-5.8zM1065.01 314.81h5.8v3.59h-5.8zM1094.03 149.67h5.8v3.59h-5.8zM1094.03 253.78h5.8v3.59h-5.8zM1105.64 106.59h5.8v3.59h-5.8zM1134.66 207.11h5.8v3.59h-5.8zM1157.88 120.95h5.8v3.59h-5.8zM1181.11 264.55h5.8v3.59h-5.8zM1181.11 354.3h5.8v3.59h-5.8zM1192.71 103h5.8v3.59h-5.8zM1204.33 379.43h5.8v3.59h-5.8zM1227.55 174.8h5.8v3.59h-5.8zM1244.96 329.17h5.8v3.59h-5.8zM1250.76 260.96h5.8v3.59h-5.8zM1320.42 239.42h5.8v3.59h-5.8zM1320.42 325.58h5.8v3.59h-5.8zM1349.45 268.14h5.8v3.59h-5.8zM1355.26 232.24h5.8v3.59h-5.8zM1384.28 232.24h5.8v3.59h-5.8zM1384.28 243.01h5.8v3.59h-5.8z"/><path fill="#3c3c3c" d="M914.08 128.13h5.8v3.59h-5.8zM914.08 375.84h5.8v3.59h-5.8zM989.54 110.18h5.8v3.59h-5.8zM1244.96 260.96h5.8v3.59h-5.8z"/><path d="M826.5 103V462.500H1407" stroke="#444" stroke-width="1" fill="none"/><path d="M821 107.3h5.5" stroke="#444" stroke-width="1"/><text x="818.5" y="111" text-anchor="end" class="ct">−28.06</text><path d="M821 146.95h5.5" stroke="#444" stroke-width="1"/><text x="818.5" y="151" text-anchor="end" class="ct">−28.07</text><path d="M821 186.6h5.5" stroke="#444" stroke-width="1"/><text x="818.5" y="191" text-anchor="end" class="ct">−28.08</text><path d="M821 226.25h5.5" stroke="#444" stroke-width="1"/><text x="818.5" y="230" text-anchor="end" class="ct">−28.09</text><path d="M821 265.9h5.5" stroke="#444" stroke-width="1"/><text x="818.5" y="270" text-anchor="end" class="ct">−28.1</text><path d="M821 305.55h5.5" stroke="#444" stroke-width="1"/><text x="818.5" y="310" text-anchor="end" class="ct">−28.11</text><path d="M821 345.2h5.5" stroke="#444" stroke-width="1"/><text x="818.5" y="349" text-anchor="end" class="ct">−28.12</text><path d="M821 384.85h5.5" stroke="#444" stroke-width="1"/><text x="818.5" y="389" text-anchor="end" class="ct">−28.13</text><path d="M821 424.5h5.5" stroke="#444" stroke-width="1"/><text x="818.5" y="429" text-anchor="end" class="ct">−28.14</text><path d="M857.7 462.500v5.5" stroke="#444" stroke-width="1"/><text x="857.7" y="482" text-anchor="middle" class="ct">53.18</text><path d="M961.7 462.500v5.5" stroke="#444" stroke-width="1"/><text x="961.7" y="482" text-anchor="middle" class="ct">53.16</text><path d="M1065.6 462.500v5.5" stroke="#444" stroke-width="1"/><text x="1065.6" y="482" text-anchor="middle" class="ct">53.14</text><path d="M1169.6 462.500v5.5" stroke="#444" stroke-width="1"/><text x="1169.6" y="482" text-anchor="middle" class="ct">53.12</text><path d="M1273.5 462.500v5.5" stroke="#444" stroke-width="1"/><text x="1273.5" y="482" text-anchor="middle" class="ct">53.1</text><path d="M1377.5 462.500v5.5" stroke="#444" stroke-width="1"/><text x="1377.5" y="482" text-anchor="middle" class="ct">53.08</text><text x="1116.5" y="508" text-anchor="middle" class="ct" style="font-size:12px">coord_ra</text><text transform="translate(759.2 281.500) rotate(-90)" text-anchor="middle" class="ct" style="font-size:12px">coord_dec</text><text x="1428.3" y="127" class="ct" style="font-size:14px">pts</text><defs><linearGradient id="cbg" x1="0" y1="0" x2="0" y2="1"><stop offset="0" stop-color="#252525"/><stop offset="0.18" stop-color="#555"/><stop offset="0.5" stop-color="#8a8a8a"/><stop offset="0.85" stop-color="#d0d0d0"/><stop offset="1" stop-color="#f8f8f8"/></linearGradient></defs><rect x="1429.2" y="135" width="10" height="317" fill="url(#cbg)"/><text x="1442" y="196.9" class="ct">200</text><text x="1442" y="264.9" class="ct">150</text><text x="1442" y="332.9" class="ct">100</text><text x="1442" y="400.9" class="ct">50</text></g></svg>
<div style="position:absolute;left:5px;top:528px;width:1482px;height:35px;background:#f0f4f8;border-radius:4px 4px 0 0"></div>
<div style="position:absolute;left:5px;top:563px;width:1482px;height:1px;background:#cdd7e1"></div>
<div style="position:absolute;left:8.5px;top:530.5px;width:13px;height:13px;background:#e3effb;border-radius:4px"></div>
<div style="position:absolute;left:10px;top:532px;width:10px;height:10px;background:#8b0000;border-radius:2.5px"></div>
<div style="position:absolute;left:615.5px;top:533px;width:34.5px;height:23px;border:1px solid #cdd7e1;border-radius:6px;background:#fbfcfe"></div>
<div style="position:absolute;left:5px;top:817px;width:1468px;height:2.7px;background:linear-gradient(#f1f1f2,#dfdfe0)"></div>
<div style="position:absolute;left:29px;top:564px;width:2px;height:255.700px;background:#cdd7e1"></div>
<div style="position:absolute;left:146px;top:564px;width:1px;height:255.700px;background:#cdd7e1"></div>
<div style="position:absolute;left:272px;top:564px;width:1px;height:255.700px;background:#cdd7e1"></div>
<div style="position:absolute;left:387px;top:564px;width:1px;height:255.700px;background:#cdd7e1"></div>
<div style="position:absolute;left:462px;top:564px;width:1px;height:255.700px;background:#cdd7e1"></div>
<div style="position:absolute;left:580px;top:564px;width:1px;height:255.700px;background:#cdd7e1"></div>
<div style="position:absolute;left:665px;top:564px;width:1px;height:255.700px;background:#cdd7e1"></div>
<div style="position:absolute;left:751px;top:564px;width:1px;height:255.700px;background:#cdd7e1"></div>
<div style="position:absolute;left:862px;top:564px;width:1px;height:255.700px;background:#cdd7e1"></div>
<div style="position:absolute;left:980px;top:564px;width:1px;height:255.700px;background:#cdd7e1"></div>
<div style="position:absolute;left:5px;top:636px;width:1482px;height:1px;background:#cdd7e1"></div>
<div style="position:absolute;left:1472px;top:637px;width:1px;height:182.700px;background:#cdd7e1"></div>
<div style="position:absolute;left:1477px;top:641px;width:6px;height:22px;background:#cdd7e1;border-radius:3px"></div>
<div style="position:absolute;left:10px;top:566px;width:12px;height:12px;border:1px solid #cdd7e1;border-radius:3.5px;background:#fbfcfe"></div>
<div style="position:absolute;left:32px;top:610px;width:110px;height:23px;border:1px solid #cdd7e1;border-radius:6px;background:#fbfcfe"></div>
<div style="position:absolute;left:149px;top:610px;width:119px;height:23px;border:1px solid #cdd7e1;border-radius:6px;background:#fbfcfe"></div>
<div style="position:absolute;left:275px;top:610px;width:108px;height:23px;border:1px solid #cdd7e1;border-radius:6px;background:#fbfcfe"></div>
<div style="position:absolute;left:390px;top:610px;width:68px;height:23px;border:1px solid #cdd7e1;border-radius:6px;background:#fbfcfe"></div>
<div style="position:absolute;left:465px;top:610px;width:111px;height:23px;border:1px solid #cdd7e1;border-radius:6px;background:#fbfcfe"></div>
<div style="position:absolute;left:583px;top:610px;width:78px;height:23px;border:1px solid #cdd7e1;border-radius:6px;background:#fbfcfe"></div>
<div style="position:absolute;left:668px;top:610px;width:79px;height:23px;border:1px solid #cdd7e1;border-radius:6px;background:#fbfcfe"></div>
<div style="position:absolute;left:754px;top:610px;width:104px;height:23px;border:1px solid #cdd7e1;border-radius:6px;background:#fbfcfe"></div>
<div style="position:absolute;left:865px;top:610px;width:111px;height:23px;border:1px solid #cdd7e1;border-radius:6px;background:#fbfcfe"></div>
<div style="position:absolute;left:5px;top:637px;width:1467px;height:20px;background:#fce1c4"></div>
<div style="position:absolute;left:29px;top:637px;width:2px;height:19px;background:#cdd7e1"></div>
<div style="position:absolute;left:146px;top:637px;width:1px;height:19px;background:#cdd7e1"></div>
<div style="position:absolute;left:272px;top:637px;width:1px;height:19px;background:#cdd7e1"></div>
<div style="position:absolute;left:387px;top:637px;width:1px;height:19px;background:#cdd7e1"></div>
<div style="position:absolute;left:462px;top:637px;width:1px;height:19px;background:#cdd7e1"></div>
<div style="position:absolute;left:580px;top:637px;width:1px;height:19px;background:#cdd7e1"></div>
<div style="position:absolute;left:665px;top:637px;width:1px;height:19px;background:#cdd7e1"></div>
<div style="position:absolute;left:751px;top:637px;width:1px;height:19px;background:#cdd7e1"></div>
<div style="position:absolute;left:862px;top:637px;width:1px;height:19px;background:#cdd7e1"></div>
<div style="position:absolute;left:980px;top:637px;width:1px;height:19px;background:#cdd7e1"></div>
<div style="position:absolute;left:5px;top:656px;width:976px;height:1px;background:#cdd7e1"></div>
<div style="position:absolute;left:10px;top:640px;width:12px;height:12px;border:1px solid #cdd7e1;border-radius:3.5px;background:#fbfcfe"></div>
<div style="position:absolute;left:5px;top:676px;width:976px;height:1px;background:#cdd7e1"></div>
<div style="position:absolute;left:10px;top:660px;width:12px;height:12px;border:1px solid #cdd7e1;border-radius:3.5px;background:#fbfcfe"></div>
<div style="position:absolute;left:5px;top:696px;width:976px;height:1px;background:#cdd7e1"></div>
<div style="position:absolute;left:10px;top:680px;width:12px;height:12px;border:1px solid #cdd7e1;border-radius:3.5px;background:#fbfcfe"></div>
<div style="position:absolute;left:5px;top:716px;width:976px;height:1px;background:#cdd7e1"></div>
<div style="position:absolute;left:10px;top:700px;width:12px;height:12px;border:1px solid #cdd7e1;border-radius:3.5px;background:#fbfcfe"></div>
<div style="position:absolute;left:5px;top:736px;width:976px;height:1px;background:#cdd7e1"></div>
<div style="position:absolute;left:10px;top:720px;width:12px;height:12px;border:1px solid #cdd7e1;border-radius:3.5px;background:#fbfcfe"></div>
<div style="position:absolute;left:5px;top:756px;width:976px;height:1px;background:#cdd7e1"></div>
<div style="position:absolute;left:10px;top:740px;width:12px;height:12px;border:1px solid #cdd7e1;border-radius:3.5px;background:#fbfcfe"></div>
<div style="position:absolute;left:5px;top:776px;width:976px;height:1px;background:#cdd7e1"></div>
<div style="position:absolute;left:10px;top:760px;width:12px;height:12px;border:1px solid #cdd7e1;border-radius:3.5px;background:#fbfcfe"></div>
<div style="position:absolute;left:5px;top:796px;width:976px;height:1px;background:#cdd7e1"></div>
<div style="position:absolute;left:10px;top:780px;width:12px;height:12px;border:1px solid #cdd7e1;border-radius:3.5px;background:#fbfcfe"></div>
<div style="position:absolute;left:5px;top:816px;width:976px;height:1px;background:#cdd7e1"></div>
<div style="position:absolute;left:10px;top:800px;width:12px;height:12px;border:1px solid #cdd7e1;border-radius:3.5px;background:#fbfcfe"></div>
<div style="position:absolute;left:5px;top:819.7px;width:1482px;height:3px;background:#fbfcfe"></div>
<svg id="ic" width="1489" height="822" viewBox="0 0 1489 822">
<path transform="translate(522 55) scale(-1.2412 1.2412) translate(-12 -12)" fill="#32383e" d="m13.780 15.300 6 6 2.110-2.160-6-6zm3.720-5.200c-.39 0-.81-.05-1.140-.19L4.970 21.250l-2.110-2.110 7.410-7.400L8.500 9.960l-.72.700-1.450-1.410v2.860l-.7.700-3.520-3.560.7-.7h2.810l-1.400-1.410 3.560-3.560a2.976 2.976 0 0 1 4.220 0L9.890 5.740l1.410 1.400-.71.710 1.790 1.780 1.820-1.880c-.14-.33-.2-.75-.2-1.120a3.490 3.490 0 0 1 3.500-3.520c.59 0 1.110.14 1.580.42L16.410 6.200l1.500 1.500 2.670-2.670c.28.470.42.970.42 1.600 0 1.920-1.550 3.470-3.500 3.470" />
<path d="M509.9 64.9L520.1 64.9L515 69.4z" fill="#32383e" stroke="#32383e" stroke-width="1.8" stroke-linejoin="round"/>
<path transform="translate(572.75 55.1) scale(1.1325 1.1325) translate(-12 -12)" fill="#32383e" d="M12 22A10 10 0 0 1 2 12 10 10 0 0 1 12 2c5.500 0 10 4 10 9a6 6 0 0 1-6 6h-1.800c-.3 0-.5.200-.5.500 0 .1.100.2.100.3.400.5.600 1.100.600 1.700.1 1.400-1 2.500-2.400 2.500m0-18a8 8 0 0 0-8 8 8 8 0 0 0 8 8c.3 0 .5-.2.5-.5 0-.2-.1-.3-.1-.4-.4-.5-.6-1-.6-1.600 0-1.400 1.100-2.500 2.500-2.500H16a4 4 0 0 0 4-4c0-3.900-3.600-7-8-7m-5.500 6c.8 0 1.500.7 1.500 1.500S7.300 13 6.500 13 5 12.300 5 11.500 5.700 10 6.500 10m3-4c.8 0 1.500.7 1.500 1.500S10.300 9 9.500 9 8 8.300 8 7.500 8.700 6 9.500 6m5 0c.8 0 1.500.7 1.500 1.500S15.300 9 14.500 9 13 8.300 13 7.500 13.700 6 14.500 6m3 4c.8 0 1.500.7 1.500 1.500s-.7 1.500-1.500 1.500-1.500-.7-1.500-1.500.7-1.500 1.500-1.500" />
<path d="M555.9 64.4L565.6 64.4L560.75 69.1z" fill="#32383e" stroke="#32383e" stroke-width="1.8" stroke-linejoin="round"/>
<path transform="translate(605.15 55.1) scale(1.1250 1.1250) translate(-12 -12)" fill="#32383e" d="M5 15H3v4a2 2 0 0 0 2 2h4v-2H5M5 5h4V3H5a2 2 0 0 0-2 2v4h2m14-6h-4v2h4v4h2V5a2 2 0 0 0-2-2m0 16h-4v2h4a2 2 0 0 0 2-2v-4h-2m-7-7a4 4 0 0 0-4 4 4 4 0 0 0 4 4 4 4 0 0 0 4-4 4 4 0 0 0-4-4m0 6a2 2 0 0 1-2-2 2 2 0 0 1 2-2 2 2 0 0 1 2 2 2 2 0 0 1-2 2" />
<path d="M590.9 64.4L601.1 64.4L596 69.1z" fill="#32383e" stroke="#32383e" stroke-width="1.8" stroke-linejoin="round"/>
<rect x="595" y="59" width="2.2" height="5" fill="#32383e"/>
<circle cx="636" cy="54.6" r="10.5" fill="none" stroke="#32383e" stroke-width="1.25" stroke-dasharray="2 0.9"/>
<path d="M622.9 63.9L632.1 63.9L627.5 68.3z" fill="#32383e" stroke="#32383e" stroke-width="1.8" stroke-linejoin="round"/>
<path transform="translate(665.85 57) scale(1.1518 1.1518) translate(-12 -11.53)" fill="#32383e" d="m12 16 7.360-5.730L21 9l-9-7-9 7 1.630 1.270M12 18.540l-7.380-5.730L3 14.070l9 7 9-7-1.630-1.270z" />
<circle cx="678" cy="48" r="8.3" fill="#fbfcfe"/><circle cx="678" cy="48" r="7" fill="#0b6bcb"/>
<path transform="translate(699 52.5) scale(1.0500 1.0500) translate(-12 -12)" fill="#32383e" d="M17 7h-4v1.900h4c1.710 0 3.100 1.390 3.100 3.100 0 1.430-.98 2.630-2.310 3l1.460 1.440C20.880 15.610 22 13.950 22 12a5 5 0 0 0-5-5m-1 4h-2.190l2 2H16zM2 4.270l3.110 3.110A4.990 4.990 0 0 0 2 12a5 5 0 0 0 5 5h4v-1.900H7c-1.710 0-3.100-1.390-3.100-3.100 0-1.590 1.210-2.900 2.760-3.070L8.730 11H8v2h2.730L13 15.270V17h1.730l4.010 4L20 19.740 3.270 3z" />
<path d="M688.9 63.9L698.6 63.9L693.75 68.3z" fill="#32383e" stroke="#32383e" stroke-width="1.8" stroke-linejoin="round"/>
<path d="M718.5 46.5h7.56l-7.56 7.56zM736.5 64h-7.56l7.56 -7.56z" fill="#32383e"/><path d="M720.5 48.5L734.5 62" stroke="#32383e" stroke-width="2" fill="none"/>
<path d="M92.1 85.4L99.7 85.4L95.9 89.3z" fill="#555e68" stroke="#555e68" stroke-width="1.8" stroke-linejoin="round"/>
<path d="M241.6 85.4L248.3 85.4L244.95 89.3z" fill="#555e68" stroke="#555e68" stroke-width="1.8" stroke-linejoin="round"/>
<circle cx="18" cy="130.8" r="8.1" fill="none" stroke="#32383e" stroke-width="3"/><path d="M24.3 137.1L27.6 140.4" stroke="#32383e" stroke-width="3.4" stroke-linecap="round"/><path d="M13.9 130.9h8.2M18 126.8v8.2" stroke="#555e68" stroke-width="1.5"/>
<circle cx="44" cy="130.8" r="8.1" fill="none" stroke="#32383e" stroke-width="3"/><path d="M50.3 137.1L53.6 140.4" stroke="#32383e" stroke-width="3.4" stroke-linecap="round"/><path d="M39.9 130.9h8.2" stroke="#555e68" stroke-width="1.6"/>
<circle cx="70" cy="130.8" r="8.1" fill="none" stroke="#32383e" stroke-width="3"/><path d="M76.3 137.1L79.6 140.4" stroke="#32383e" stroke-width="3.4" stroke-linecap="round"/><path d="M65 125.8h3.9l-3.9 3.9z" fill="#555e68"/><path d="M68.7 129.5L66 126.8" stroke="#555e68" stroke-width="1.5"/><path d="M65 135.8h3.9l-3.9 -3.9z" fill="#555e68"/><path d="M68.7 132.1L66 134.8" stroke="#555e68" stroke-width="1.5"/><path d="M75 125.8h-3.9l3.9 3.9z" fill="#555e68"/><path d="M71.3 129.5L74 126.8" stroke="#555e68" stroke-width="1.5"/><path d="M75 135.8h-3.9l3.9 -3.9z" fill="#555e68"/><path d="M71.3 132.1L74 134.8" stroke="#555e68" stroke-width="1.5"/>
<circle cx="96" cy="130.8" r="8.1" fill="none" stroke="#32383e" stroke-width="3"/><path d="M102.3 137.1L105.6 140.4" stroke="#32383e" stroke-width="3.4" stroke-linecap="round"/><path d="M89.6 130.9l3.2-2.5v1.8h6.4v-1.8l3.2 2.5-3.2 2.5v-1.8h-6.400v1.8z" fill="#555e68"/>
<path transform="translate(23.25 509.5) scale(0.8583 0.8583) translate(-12 -12)" fill="#32383e" d="M14 3v2h3.590l-9.830 9.830 1.410 1.410L19 6.410V10h2V3m-2 16H5V5h7V3H5a2 2 0 0 0-2 2v14a2 2 0 0 0 2 2h14a2 2 0 0 0 2-2v-7h-2z" />
<path transform="translate(762.65 55) scale(1.0625 1.0625) translate(-12 -12)" fill="#32383e" d="M13 7h-2v4H7v2h4v4h2v-4h4v-2h-4V7zm-1-5C6.480 2 2 6.480 2 12s4.480 10 10 10 10-4.480 10-10S17.520 2 12 2zm0 18c-4.410 0-8-3.590-8-8s3.590-8 8-8 8 3.590 8 8-3.590 8-8 8z" />
<path transform="translate(1198.35 54.5) scale(1.0714 1.0714) translate(-12 -12)" fill="#32383e" d="M16 9V4h1c.55 0 1-.45 1-1s-.45-1-1-1H7c-.55 0-1 .45-1 1s.45 1 1 1h1v5c0 1.660-1.340 3-3 3v2h5.970v7l1 1 1-1v-7H19v-2c-1.660 0-3-1.340-3-3z" />
<circle cx="1226.8" cy="54.8" r="8.4" fill="none" stroke="#636b74" stroke-width="2.8"/><path d="M1233.4 61.4L1236.7 64.7" stroke="#636b74" stroke-width="3.4" stroke-linecap="round"/><path d="M1222.7 54.9h8.2M1226.8 50.8v8.2" stroke="#636b74" stroke-width="1.5"/>
<path transform="translate(1253 54.75) scale(0.9137 0.9137) translate(-11.75 -12)" fill="#636b74" d="M21 7a2.500 2.500 0 0 0-2.500-2.500c-.17 0-.34 0-.5.050V4a2.500 2.500 0 0 0-3.170-2.410A2.510 2.510 0 0 0 12.500 0c-1.230 0-2.250.89-2.460 2.060C9.870 2 9.690 2 9.500 2A2.500 2.500 0 0 0 7 4.500v5.890c-.34-.31-.76-.54-1.220-.66L5 9.500c-.82-.21-1.690.11-2.180.85-.38.57-.4 1.310-.15 1.950l2.560 6.430A8.360 8.360 0 0 0 13 24c4.420 0 8-3.580 8-8zm-2 9c0 3.310-2.690 6-6 6a6.360 6.360 0 0 1-5.910-4L4.500 11.450l.5.140c.5.120.85.460 1 .910L7 15h2V4.500c0-.28.22-.5.5-.5s.5.220.5.500V12h2V2.500c0-.28.22-.5.5-.5s.5.220.5.500V12h2V4c0-.28.22-.5.5-.5s.5.220.5.500v8h2V7c0-.28.22-.5.5-.5s.5.220.5.500z" />
<rect x="1272.700" y="46.2" width="18.8" height="17.8" fill="none" stroke="#171a1c" stroke-width="2.4" stroke-dasharray="3.4 1.4 1.4 1.4" stroke-dashoffset="1.7"/>
<circle cx="1312.4" cy="54.6" r="8.9" fill="none" stroke="#32383e" stroke-width="3.2"/><path d="M1319.8 62l3.4 3.4" stroke="#32383e" stroke-width="3.4" stroke-linecap="round"/><text x="1312.3" y="57.8" text-anchor="middle" font-family="DejaVu Sans,Liberation Sans,sans-serif" font-size="8.6" font-weight="bold" letter-spacing="-0.3" fill="#32383e" opacity="0.99">1X</text>
<path transform="translate(1346.05 54.9) scale(1.1750 1.1750) translate(-12 -12)" fill="#32383e" d="M17 3H5a2 2 0 0 0-2 2v14a2 2 0 0 0 2 2h14c1.100 0 2-.9 2-2V7zm2 16H5V5h11.170L19 7.830zm-7-7c-1.660 0-3 1.340-3 3s1.340 3 3 3 3-1.340 3-3-1.340-3-3-3M6 6h9v4H6z" />
<path transform="translate(1380.1 55) scale(1.1234 1.1234) translate(-12 -11.47)" fill="#32383e" d="M12 5V2L8 6l4 4V7c3.310 0 6 2.690 6 6 0 2.970-2.170 5.430-5 5.910v2.020c3.950-.49 7-3.850 7-7.930 0-4.420-3.580-8-8-8zm-6 8c0-1.650.67-3.150 1.760-4.240L6.340 7.340C4.900 8.790 4 10.790 4 13c0 4.080 3.050 7.440 7 7.930v-2.020c-2.830-.48-5-2.940-5-5.910z" />
<path transform="translate(1412.5 54.5) scale(1.0654 1.0654) translate(-11.99 -12)" fill="#32383e" d="M7 6h10l-5.010 6.300L7 6zm-2.750-.39C6.270 8.200 10 13 10 13v6c0 .55.45 1 1 1h2c.55 0 1-.45 1-1v-6s3.720-4.800 5.740-7.390c.51-.66.040-1.610-.79-1.610H5.040c-.83 0-1.300.95-.79 1.610z" />
<path transform="translate(1444.75 54.5) scale(1.0519 1.0519) translate(-12 -12)" fill="#32383e" d="M19.430 12.980c.040-.32.070-.64.070-.98 0-.34-.03-.66-.07-.98l2.110-1.650c.190-.15.240-.42.120-.64l-2-3.460c-.090-.16-.26-.25-.44-.25-.06 0-.12.010-.17.030l-2.490 1c-.52-.4-1.080-.73-1.690-.98l-.38-2.650C14.460 2.180 14.250 2 14 2h-4c-.25 0-.46.180-.49.420l-.38 2.650c-.61.250-1.170.590-1.690.980l-2.490-1c-.06-.02-.12-.03-.18-.03-.17 0-.34.090-.43.250l-2 3.460c-.13.220-.07.490.12.640l2.110 1.650c-.04.320-.07.650-.07.980 0 .33.030.66.070.98l-2.110 1.650c-.19.150-.24.420-.12.640l2 3.460c.09.160.26.250.44.250.06 0 .12-.01.17-.03l2.490-1c.52.400 1.080.730 1.690.980l.38 2.650c.03.240.24.420.49.420h4c.25 0 .46-.18.490-.42l.38-2.650c.61-.25 1.170-.59 1.690-.98l2.490 1c.06.020.12.030.18.030.17 0 .34-.09.43-.25l2-3.460c.12-.22.070-.49-.12-.64l-2.110-1.650zm-1.980-1.710c.04.310.05.520.05.730 0 .21-.02.430-.05.730l-.14 1.130.89.700 1.080.84-.7 1.210-1.270-.51-1.040-.42-.9.680c-.43.320-.84.560-1.250.73l-1.060.43-.16 1.130-.2 1.350h-1.400l-.19-1.350-.16-1.130-1.060-.43c-.43-.18-.83-.41-1.230-.71l-.91-.7-1.060.43-1.270.51-.7-1.210 1.080-.84.890-.70-.14-1.130c-.03-.31-.05-.54-.05-.74s.02-.43.050-.73l.14-1.130-.89-.70-1.080-.84.7-1.210 1.270.51 1.040.42.900-.68c.43-.32.840-.56 1.250-.73l1.060-.43.160-1.130.2-1.350h1.390l.19 1.350.16 1.130 1.060.43c.43.180.83.410 1.230.71l.91.70 1.060-.43 1.270-.51.7 1.210-1.070.85-.89.70.14 1.130zM12 8c-2.210 0-4 1.790-4 4s1.790 4 4 4 4-1.790 4-4-1.790-4-4-4zm0 6c-1.100 0-2-.90-2-2s.9-2 2-2 2 .9 2 2-.9 2-2 2z" />
<path d="M1464.5 47h7.35l-7.35 7.35zM1482 64h-7.35l7.35 -7.35z" fill="#32383e"/><path d="M1466.5 49L1480 62" stroke="#32383e" stroke-width="2" fill="none"/>
<path d="M176.2 534.5l6.4 6.4M182.600 534.5l-6.4 6.4" stroke="#636b74" stroke-width="1.2" fill="none"/>
<path transform="translate(574.55 545.6) scale(0.9542 0.9542) translate(-12.2 -12)" fill="#32383e" d="M18.410 16.590 13.820 12l4.590-4.590L17 6l-6 6 6 6zM6 6h2v12H6z" />
<path transform="translate(600.95 545.6) scale(0.9592 0.9592) translate(-11.7 -12)" fill="#32383e" d="M15.410 7.410 14 6l-6 6 6 6 1.410-1.410L10.830 12z" />
<path transform="translate(700.85 545.6) scale(0.9592 0.9592) translate(-12.3 -12)" fill="#32383e" d="M10 6 8.590 7.410 13.170 12l-4.580 4.590L10 18l6-6z" />
<path transform="translate(727.1 545.6) scale(0.9582 0.9582) translate(-11.8 -12)" fill="#32383e" d="M5.590 7.410 10.180 12l-4.590 4.590L7 18l6-6-6-6zM16 6h2v12h-2z" />
<path transform="translate(848.65 545.4) scale(0.8195 0.8195) translate(-12 -11.5)" fill="#9a5b13" d="M12 5.990 19.530 19H4.470L12 5.990M12 2 1 21h22L12 2zm1 14h-2v2h2v-2zm0-6h-2v5h2v-5z" />
<path transform="translate(1250.35 545.15) scale(1.2118 1.2118) translate(-12 -11.5)" fill="#32383e" d="M7 19c-1.100 0-2 .9-2 2h14c0-1.100-.9-2-2-2h-4v-2h3c1.100 0 2-.9 2-2h-8c-1.660 0-3-1.340-3-3 0-1.090.59-2.040 1.460-2.560C8.170 9.030 8 8.540 8 8c0-.21.040-.42.090-.62C6.280 8.130 5 9.920 5 12c0 2.760 2.240 5 5 5v2H7zM10.560 5.510C11.910 5.540 13 6.640 13 8c0 .75-.33 1.410-.85 1.870l.59 1.620.94-.34.34.94 1.880-.68-.34-.94.94-.34-2.740-7.520-.94.34-.34-.94-1.880.68.34.94-.94.35.56 1.530zM12.200 4.300l1.030-.38 2.050 5.640-1.030.38zM10.500 5.600a2.400 2.400 0 1 0 0 4.800 2.400 2.400 0 0 0 0-4.800zM10.500 6.800a1.200 1.200 0 1 1 0 2.400 1.200 1.200 0 0 1 0-2.400z" fill-rule="evenodd"/>
<path d="M1233.9 554.4L1243.1 554.4L1238.5 559.1z" fill="#32383e" stroke="#32383e" stroke-width="1.8" stroke-linejoin="round"/>
<path transform="translate(1283.65 545.4) scale(1.0560 1.0560) translate(-11.99 -12)" fill="#32383e" d="M7 6h10l-5.010 6.300L7 6zm-2.750-.39C6.270 8.200 10 13 10 13v6c0 .55.45 1 1 1h2c.55 0 1-.45 1-1v-6s3.720-4.800 5.740-7.390c.51-.66.040-1.610-.79-1.610H5.040c-.83 0-1.300.95-.79 1.610z" />
<path transform="translate(1314.75 545) scale(1.0623 1.0623) translate(-12 -11.5)" fill="#32383e" d="M2.500 4v3h5v12h3V7h5V4h-13zm19 5h-9v3h3v7h3v-7h3V9z" />
<path transform="translate(1348.15 545.75) scale(1.1556 1.1556) translate(-12 -12)" fill="#32383e" d="M17 3H5a2 2 0 0 0-2 2v14a2 2 0 0 0 2 2h14c1.100 0 2-.9 2-2V7zm2 16H5V5h11.170L19 7.830zm-7-7c-1.660 0-3 1.340-3 3s1.340 3 3 3 3-1.340 3-3-1.340-3-3-3M6 6h9v4H6z" />
<rect x="1372" y="536" width="7" height="18.6" rx="1.3" fill="none" stroke="#32383e" stroke-width="1.8"/>
<circle cx="1387.5" cy="546.5" r="6" fill="none" stroke="#32383e" stroke-width="1.1"/><path d="M1384 546.5h7M1387.5 543v7" stroke="#32383e" stroke-width="1.1"/>
<path transform="translate(1412.15 545.9) scale(1.1775 1.1775) translate(-12 -12)" fill="#32383e" d="M11 7h2v2h-2zm0 4h2v6h-2zm1-9C6.480 2 2 6.480 2 12s4.480 10 10 10 10-4.480 10-10S17.520 2 12 2zm0 18c-4.410 0-8-3.590-8-8s3.590-8 8-8 8 3.590 8 8-3.590 8-8 8z" />
<path transform="translate(1444.8 545.55) scale(1.0619 1.0619) translate(-12 -12)" fill="#32383e" d="M19.430 12.980c.040-.32.070-.64.070-.98 0-.34-.03-.66-.07-.98l2.110-1.650c.190-.15.240-.42.120-.64l-2-3.460c-.090-.16-.26-.25-.44-.25-.06 0-.12.010-.17.030l-2.490 1c-.52-.4-1.080-.73-1.690-.98l-.38-2.650C14.460 2.180 14.250 2 14 2h-4c-.25 0-.46.180-.49.420l-.38 2.650c-.61.250-1.170.590-1.690.980l-2.490-1c-.06-.02-.12-.03-.18-.03-.17 0-.34.090-.43.250l-2 3.460c-.13.220-.07.490.12.640l2.110 1.650c-.04.320-.07.650-.07.980 0 .33.030.66.070.98l-2.110 1.650c-.19.150-.24.420-.12.640l2 3.460c.09.160.26.250.44.250.06 0 .12-.01.17-.03l2.490-1c.52.400 1.080.730 1.690.980l.38 2.650c.03.240.24.420.49.420h4c.25 0 .46-.18.490-.42l.38-2.650c.61-.25 1.170-.59 1.690-.98l2.490 1c.06.020.12.030.18.030.17 0 .34-.09.43-.25l2-3.460c.12-.22.070-.49-.12-.64l-2.110-1.650zm-1.980-1.710c.04.310.05.520.05.730 0 .21-.02.430-.05.730l-.14 1.130.89.700 1.080.84-.7 1.210-1.270-.51-1.040-.42-.9.680c-.43.320-.84.560-1.250.73l-1.060.43-.16 1.130-.2 1.350h-1.400l-.19-1.350-.16-1.130-1.060-.43c-.43-.18-.83-.41-1.230-.71l-.91-.7-1.060.43-1.270.51-.7-1.210 1.080-.84.890-.70-.14-1.130c-.03-.31-.05-.54-.05-.74s.02-.43.050-.73l.14-1.130-.89-.70-1.080-.84.7-1.210 1.270.51 1.040.42.900-.68c.43-.32.840-.56 1.250-.73l1.060-.43.160-1.130.2-1.350h1.390l.19 1.350.16 1.130 1.060.43c.43.180.83.410 1.230.71l.91.70 1.060-.43 1.270-.51.7 1.210-1.070.85-.89.70.14 1.130zM12 8c-2.210 0-4 1.790-4 4s1.790 4 4 4 4-1.790 4-4-1.790-4-4-4zm0 6c-1.100 0-2-.90-2-2s.9-2 2-2 2 .9 2 2-.9 2-2 2z" />
<path d="M1464.4 536.5h7.52l-7.52 7.52zM1482.3 554.2h-7.52l7.52 -7.52z" fill="#32383e"/><path d="M1466.4 538.5L1480.3 552.2" stroke="#32383e" stroke-width="2" fill="none"/>
<path transform="translate(17.5 622.35) scale(0.7614 0.7614) translate(-11.99 -12)" fill="#171a1c" d="M7 6h10l-5.010 6.300L7 6zm-2.750-.39C6.270 8.200 10 13 10 13v6c0 .55.45 1 1 1h2c.55 0 1-.45 1-1v-6s3.720-4.800 5.740-7.390c.51-.66.040-1.610-.79-1.610H5.040c-.83 0-1.300.95-.79 1.610z" />
<path d="M447 621.700h5.4l-2.700 2.8z" fill="#32383e"/>
<path d="M650 621.700h5.4l-2.700 2.8z" fill="#32383e"/>
<path d="M736 621.700h5.4l-2.700 2.8z" fill="#32383e"/>
</svg>
<span class="t" style="left:24.5px;top:17px;font-size:11.6px;color:#32383e;letter-spacing:-0.29px;">Coverage</span>
<span class="t" style="left:766.5px;top:17px;font-size:11.6px;color:#32383e;letter-spacing:-0.14px;">Active Chart</span>
<span class="t" style="left:851.5px;top:17px;font-size:11.6px;color:#32383e;letter-spacing:-0.07px;">Details</span>
<span class="t" style="left:675.08px;top:43px;font-size:10.5px;color:#fff;">5</span>
<span class="t" style="left:14px;top:81px;font-size:12.6px;color:#32383e;letter-spacing:-0.31px;">HiPS / MOC</span>
<span class="t" style="left:141.5px;top:81px;font-size:12.6px;color:#32383e;letter-spacing:0.17px;">Equ / Spherical</span>
<span class="t" style="left:9px;top:104px;font-size:11px;color:#171a1c;letter-spacing:-0.06px;">DP0.2 HiPS from DESC DC2 sim: gri colo…</span>
<span class="t" style="left:227.5px;top:104px;font-size:11px;color:#636b74;letter-spacing:-0.09px;">FOV:41&#x27;</span>
<span class="t" style="left:50px;top:505px;font-size:10px;color:#12467b;letter-spacing:-0.37px;">EQ-J2000:</span>
<span class="t" style="left:661.5px;top:503px;font-size:12px;color:#32383e;letter-spacing:-0.23px;">Click Lock: off</span>
<span class="t" style="left:25px;top:532px;font-size:11.5px;color:#636b74;letter-spacing:-0.1px;">dp1_v29.Source - data-int - 1</span>
<span class="t" style="left:623.5px;top:540px;font-size:11.5px;color:#32383e;">1</span>
<span class="t" style="left:656px;top:540px;font-size:11.5px;color:#555e68;letter-spacing:-0.08px;">of 500</span>
<span class="t" style="left:740.5px;top:541px;font-size:11.5px;color:#555e68;letter-spacing:-0.24px;">(1 - 100 of 50,000)</span>
<span class="t" style="left:65.25px;top:567px;font-size:11.6px;color:#171a1c;letter-spacing:0.09px;">coord_ra</span>
<span class="t" style="left:75px;top:582px;font-size:11.6px;color:#555e68;letter-spacing:-0.02px;">(deg)</span>
<span class="t" style="left:70.25px;top:597px;font-size:11.6px;color:#555e68;letter-spacing:0.28px;">double</span>
<span class="t" style="left:182.25px;top:567px;font-size:11.6px;color:#171a1c;letter-spacing:0.04px;">coord_dec</span>
<span class="t" style="left:196px;top:582px;font-size:11.6px;color:#555e68;letter-spacing:-0.02px;">(deg)</span>
<span class="t" style="left:191.25px;top:597px;font-size:11.6px;color:#555e68;letter-spacing:0.28px;">double</span>
<span class="t" style="left:307.75px;top:567px;font-size:11.6px;color:#171a1c;">sourceId</span>
<span class="t" style="left:318.25px;top:597px;font-size:11.6px;color:#555e68;letter-spacing:0.39px;">long</span>
<span class="t" style="left:411.75px;top:567px;font-size:11.6px;color:#171a1c;letter-spacing:0.17px;">band</span>
<span class="t" style="left:413.25px;top:597px;font-size:11.6px;color:#555e68;letter-spacing:0.23px;">char</span>
<span class="t" style="left:496px;top:567px;font-size:11.6px;color:#171a1c;letter-spacing:-0.15px;">psfAbMag</span>
<span class="t" style="left:503.25px;top:597px;font-size:11.6px;color:#555e68;letter-spacing:0.28px;">double</span>
<span class="t" style="left:611.75px;top:567px;font-size:11.6px;color:#171a1c;letter-spacing:0.16px;">Visit</span>
<span class="t" style="left:611.25px;top:597px;font-size:11.6px;color:#555e68;letter-spacing:0.39px;">long</span>
<span class="t" style="left:692.25px;top:567px;font-size:11.6px;color:#171a1c;letter-spacing:0.16px;">VisitId</span>
<span class="t" style="left:696.75px;top:597px;font-size:11.6px;color:#555e68;letter-spacing:0.39px;">long</span>
<span class="t" style="left:771.75px;top:567px;font-size:11.6px;color:#171a1c;letter-spacing:-0.04px;">expMidptMJD</span>
<span class="t" style="left:800.25px;top:582px;font-size:11.6px;color:#555e68;letter-spacing:-0.23px;">(d)</span>
<span class="t" style="left:788.75px;top:597px;font-size:11.6px;color:#555e68;letter-spacing:0.28px;">double</span>
<span class="t" style="left:904.25px;top:567px;font-size:11.6px;color:#171a1c;letter-spacing:0.05px;">seeing</span>
<span class="t" style="left:901.5px;top:582px;font-size:11.6px;color:#555e68;letter-spacing:-0.24px;">(arcsec)</span>
<span class="t" style="left:903.25px;top:597px;font-size:11.6px;color:#555e68;letter-spacing:0.28px;">double</span>
<span class="t" style="left:32px;top:642px;font-size:10.6px;color:#24282c;letter-spacing:0.08px;">53.09687843692796</span>
<span class="t" style="left:149.7px;top:642px;font-size:10.6px;color:#24282c;letter-spacing:0.11px;">-28.11902861295615</span>
<span class="t" style="left:275.3px;top:642px;font-size:10.6px;color:#24282c;letter-spacing:0.04px;">600355353899565160</span>
<span class="t" style="left:390.3px;top:642px;font-size:10.6px;color:#24282c;letter-spacing:0.64px;">i</span>
<span class="t" style="left:465.3px;top:642px;font-size:10.6px;color:#24282c;letter-spacing:0.1px;">22.489687873977033</span>
<span class="t" style="left:583.3px;top:642px;font-size:10.6px;color:#24282c;letter-spacing:0.35px;">2024111600111</span>
<span class="t" style="left:668.3px;top:642px;font-size:10.6px;color:#24282c;letter-spacing:0.35px;">2024111600111</span>
<span class="t" style="left:754.3px;top:642px;font-size:10.6px;color:#24282c;letter-spacing:0.07px;">60631.14773439246</span>
<span class="t" style="left:865.3px;top:642px;font-size:10.6px;color:#24282c;letter-spacing:0.08px;">0.860493881573747</span>
<span class="t" style="left:32px;top:662px;font-size:10.6px;color:#24282c;letter-spacing:0.08px;">53.09687843692796</span>
<span class="t" style="left:149.7px;top:662px;font-size:10.6px;color:#24282c;letter-spacing:0.11px;">-28.11902861295615</span>
<span class="t" style="left:275.3px;top:662px;font-size:10.6px;color:#24282c;letter-spacing:0.04px;">600355353899565160</span>
<span class="t" style="left:390.3px;top:662px;font-size:10.6px;color:#24282c;letter-spacing:0.64px;">i</span>
<span class="t" style="left:465.3px;top:662px;font-size:10.6px;color:#24282c;letter-spacing:0.1px;">22.489687873977033</span>
<span class="t" style="left:583.3px;top:662px;font-size:10.6px;color:#24282c;letter-spacing:0.35px;">2024111600111</span>
<span class="t" style="left:668.3px;top:662px;font-size:10.6px;color:#24282c;letter-spacing:0.35px;">2024111600111</span>
<span class="t" style="left:754.3px;top:662px;font-size:10.6px;color:#24282c;letter-spacing:0.07px;">60631.14773439246</span>
<span class="t" style="left:865.3px;top:662px;font-size:10.6px;color:#24282c;letter-spacing:0.08px;">0.9046371007730715</span>
<span class="t" style="left:32px;top:682px;font-size:10.6px;color:#24282c;letter-spacing:0.08px;">53.09687843692796</span>
<span class="t" style="left:149.7px;top:682px;font-size:10.6px;color:#24282c;letter-spacing:0.11px;">-28.11902861295615</span>
<span class="t" style="left:275.3px;top:682px;font-size:10.6px;color:#24282c;letter-spacing:0.04px;">600355353899565160</span>
<span class="t" style="left:390.3px;top:682px;font-size:10.6px;color:#24282c;letter-spacing:0.64px;">i</span>
<span class="t" style="left:465.3px;top:682px;font-size:10.6px;color:#24282c;letter-spacing:0.1px;">22.489687873977033</span>
<span class="t" style="left:583.3px;top:682px;font-size:10.6px;color:#24282c;letter-spacing:0.35px;">2024111600111</span>
<span class="t" style="left:668.3px;top:682px;font-size:10.6px;color:#24282c;letter-spacing:0.35px;">2024111600111</span>
<span class="t" style="left:754.3px;top:682px;font-size:10.6px;color:#24282c;letter-spacing:0.07px;">60631.14773439246</span>
<span class="t" style="left:865.3px;top:682px;font-size:10.6px;color:#24282c;letter-spacing:0.08px;">0.9693289727895618</span>
<span class="t" style="left:32px;top:702px;font-size:10.6px;color:#24282c;letter-spacing:0.08px;">53.09687843692796</span>
<span class="t" style="left:149.7px;top:702px;font-size:10.6px;color:#24282c;letter-spacing:0.11px;">-28.11902861295615</span>
<span class="t" style="left:275.3px;top:702px;font-size:10.6px;color:#24282c;letter-spacing:0.04px;">600355353899565160</span>
<span class="t" style="left:390.3px;top:702px;font-size:10.6px;color:#24282c;letter-spacing:0.64px;">i</span>
<span class="t" style="left:465.3px;top:702px;font-size:10.6px;color:#24282c;letter-spacing:0.1px;">22.489687873977033</span>
<span class="t" style="left:583.3px;top:702px;font-size:10.6px;color:#24282c;letter-spacing:0.35px;">2024111600111</span>
<span class="t" style="left:668.3px;top:702px;font-size:10.6px;color:#24282c;letter-spacing:0.35px;">2024111600111</span>
<span class="t" style="left:754.3px;top:702px;font-size:10.6px;color:#24282c;letter-spacing:0.07px;">60631.14773439246</span>
<span class="t" style="left:865.3px;top:702px;font-size:10.6px;color:#24282c;letter-spacing:0.08px;">0.8359331594372623</span>
<span class="t" style="left:32px;top:722px;font-size:10.6px;color:#24282c;letter-spacing:0.08px;">53.09687843692796</span>
<span class="t" style="left:149.7px;top:722px;font-size:10.6px;color:#24282c;letter-spacing:0.11px;">-28.11902861295615</span>
<span class="t" style="left:275.3px;top:722px;font-size:10.6px;color:#24282c;letter-spacing:0.04px;">600355353899565160</span>
<span class="t" style="left:390.3px;top:722px;font-size:10.6px;color:#24282c;letter-spacing:0.64px;">i</span>
<span class="t" style="left:465.3px;top:722px;font-size:10.6px;color:#24282c;letter-spacing:0.1px;">22.489687873977033</span>
<span class="t" style="left:583.3px;top:722px;font-size:10.6px;color:#24282c;letter-spacing:0.35px;">2024111600111</span>
<span class="t" style="left:668.3px;top:722px;font-size:10.6px;color:#24282c;letter-spacing:0.35px;">2024111600111</span>
<span class="t" style="left:754.3px;top:722px;font-size:10.6px;color:#24282c;letter-spacing:0.07px;">60631.14773439246</span>
<span class="t" style="left:865.3px;top:722px;font-size:10.6px;color:#24282c;letter-spacing:0.08px;">0.8326030204923739</span>
<span class="t" style="left:32px;top:742px;font-size:10.6px;color:#24282c;letter-spacing:0.08px;">53.09687843692796</span>
<span class="t" style="left:149.7px;top:742px;font-size:10.6px;color:#24282c;letter-spacing:0.11px;">-28.11902861295615</span>
<span class="t" style="left:275.3px;top:742px;font-size:10.6px;color:#24282c;letter-spacing:0.04px;">600355353899565160</span>
<span class="t" style="left:390.3px;top:742px;font-size:10.6px;color:#24282c;letter-spacing:0.64px;">i</span>
<span class="t" style="left:465.3px;top:742px;font-size:10.6px;color:#24282c;letter-spacing:0.1px;">22.489687873977033</span>
<span class="t" style="left:583.3px;top:742px;font-size:10.6px;color:#24282c;letter-spacing:0.35px;">2024111600111</span>
<span class="t" style="left:668.3px;top:742px;font-size:10.6px;color:#24282c;letter-spacing:0.35px;">2024111600111</span>
<span class="t" style="left:754.3px;top:742px;font-size:10.6px;color:#24282c;letter-spacing:0.07px;">60631.14773439246</span>
<span class="t" style="left:865.3px;top:742px;font-size:10.6px;color:#24282c;letter-spacing:0.08px;">0.856798249844045</span>
<span class="t" style="left:32px;top:762px;font-size:10.6px;color:#24282c;letter-spacing:0.08px;">53.09687843692796</span>
<span class="t" style="left:149.7px;top:762px;font-size:10.6px;color:#24282c;letter-spacing:0.11px;">-28.11902861295615</span>
<span class="t" style="left:275.3px;top:762px;font-size:10.6px;color:#24282c;letter-spacing:0.04px;">600355353899565160</span>
<span class="t" style="left:390.3px;top:762px;font-size:10.6px;color:#24282c;letter-spacing:0.64px;">i</span>
<span class="t" style="left:465.3px;top:762px;font-size:10.6px;color:#24282c;letter-spacing:0.1px;">22.489687873977033</span>
<span class="t" style="left:583.3px;top:762px;font-size:10.6px;color:#24282c;letter-spacing:0.35px;">2024111600111</span>
<span class="t" style="left:668.3px;top:762px;font-size:10.6px;color:#24282c;letter-spacing:0.35px;">2024111600111</span>
<span class="t" style="left:754.3px;top:762px;font-size:10.6px;color:#24282c;letter-spacing:0.07px;">60631.14773439246</span>
<span class="t" style="left:865.3px;top:762px;font-size:10.6px;color:#24282c;letter-spacing:0.08px;">0.8815242437755059</span>
<span class="t" style="left:32px;top:782px;font-size:10.6px;color:#24282c;letter-spacing:0.08px;">53.09687843692796</span>
<span class="t" style="left:149.7px;top:782px;font-size:10.6px;color:#24282c;letter-spacing:0.11px;">-28.11902861295615</span>
<span class="t" style="left:275.3px;top:782px;font-size:10.6px;color:#24282c;letter-spacing:0.04px;">600355353899565160</span>
<span class="t" style="left:390.3px;top:782px;font-size:10.6px;color:#24282c;letter-spacing:0.64px;">i</span>
<span class="t" style="left:465.3px;top:782px;font-size:10.6px;color:#24282c;letter-spacing:0.1px;">22.489687873977033</span>
<span class="t" style="left:583.3px;top:782px;font-size:10.6px;color:#24282c;letter-spacing:0.35px;">2024111600111</span>
<span class="t" style="left:668.3px;top:782px;font-size:10.6px;color:#24282c;letter-spacing:0.35px;">2024111600111</span>
<span class="t" style="left:754.3px;top:782px;font-size:10.6px;color:#24282c;letter-spacing:0.07px;">60631.14773439246</span>
<span class="t" style="left:865.3px;top:782px;font-size:10.6px;color:#24282c;letter-spacing:0.08px;">0.8258764935263944</span>
<span class="t" style="left:32px;top:802px;font-size:10.6px;color:#24282c;letter-spacing:0.08px;">53.09687843692796</span>
<span class="t" style="left:149.7px;top:802px;font-size:10.6px;color:#24282c;letter-spacing:0.11px;">-28.11902861295615</span>
<span class="t" style="left:275.3px;top:802px;font-size:10.6px;color:#24282c;letter-spacing:0.04px;">600355353899565160</span>
<span class="t" style="left:390.3px;top:802px;font-size:10.6px;color:#24282c;letter-spacing:0.64px;">i</span>
<span class="t" style="left:465.3px;top:802px;font-size:10.6px;color:#24282c;letter-spacing:0.1px;">22.489687873977033</span>
<span class="t" style="left:583.3px;top:802px;font-size:10.6px;color:#24282c;letter-spacing:0.35px;">2024111600111</span>
<span class="t" style="left:668.3px;top:802px;font-size:10.6px;color:#24282c;letter-spacing:0.35px;">2024111600111</span>
<span class="t" style="left:754.3px;top:802px;font-size:10.6px;color:#24282c;letter-spacing:0.07px;">60631.14773439246</span>
<span class="t" style="left:865.3px;top:802px;font-size:10.6px;color:#24282c;letter-spacing:0.08px;">0.8227048190031859</span>
</div>
</body></html>
